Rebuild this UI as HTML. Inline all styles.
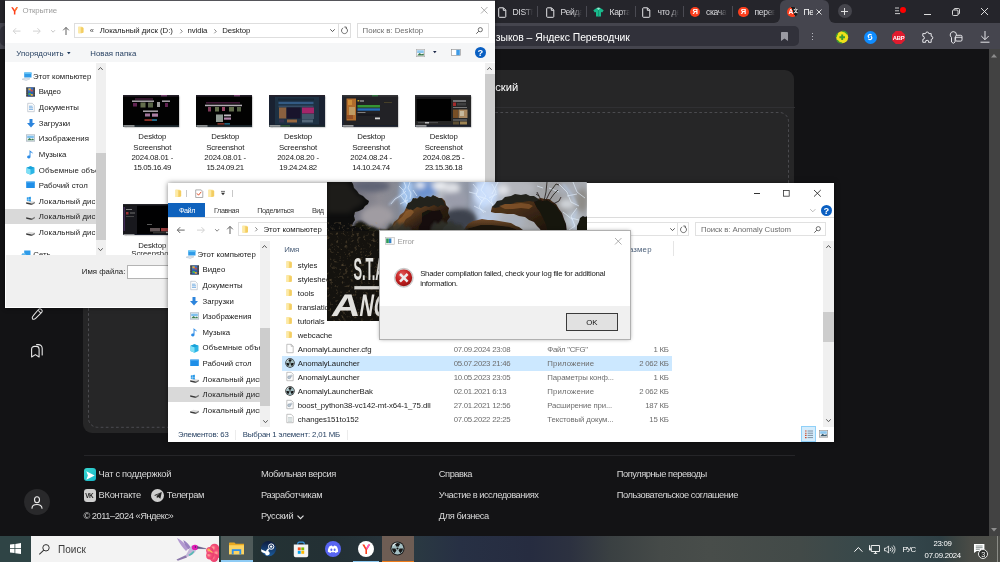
<!DOCTYPE html>
<html lang="ru">
<head>
<meta charset="utf-8">
<title>Яндекс Переводчик</title>
<style>
*{box-sizing:border-box;margin:0;padding:0}
html,body{width:1000px;height:562px;overflow:hidden;background:#131315}
body{position:relative;font-family:"Liberation Sans",sans-serif;font-size:7.8px;color:#000;line-height:1}
#root{position:absolute;left:0;top:0;width:1000px;height:562px;overflow:hidden;will-change:transform}
.a{position:absolute}
.t{position:absolute;white-space:nowrap;line-height:10px;height:10px}
svg{position:absolute;overflow:visible}
/* ---------- browser ---------- */
#tabbar{left:0;top:0;width:1000px;height:23px;background:#25252b}
#toolbar{left:0;top:22.800px;width:1000px;height:26.300px;background:#45454e}
#urlbox{left:0;top:26.200px;width:799.300px;height:20.300px;background:#31313a;border-radius:5px}
.tab{position:absolute;top:0;height:23px;color:#dcdce0;font-size:8.6px}
.tab .t{top:7px;line-height:10px}
.tsep{position:absolute;top:6px;width:1px;height:11px;background:#4a4a52}
#page{left:0;top:49.100px;width:989px;height:487px;background:#131315}
#vscroll{left:989.100px;top:49.100px;width:11px;height:487px;background:#424242}
#card{left:83.200px;top:70px;width:711px;height:363px;background:#262627;border-radius:9px}
#dash{left:88.5px;top:112.5px;width:700.5px;height:315px;border:1px dashed #4b4b4e;border-radius:9px}
.ft{position:absolute;white-space:nowrap;color:#d6d6d6;font-size:10.6px;letter-spacing:-0.55px;line-height:12px;height:12px}
/* ---------- win ---------- */
.win{position:absolute;background:#fff;overflow:hidden}
.nv{position:absolute;white-space:nowrap;font-size:7.9px;line-height:10px;height:10px;color:#111}
</style>
</head>
<body>
<div id="root">
<!-- ================= BROWSER ================= -->
<div class="a" id="tabbar"></div>
<div class="a" id="toolbar"></div>
<div class="a" id="urlbox"></div>
<div class="a" id="page"></div>
<div class="a" id="vscroll"></div>
<div class="a" id="card"></div>
<svg style="left:88.300px;top:112.400px" width="701" height="315.800" viewBox="0 0 701 315.800"><rect x=".5" y=".5" width="700" height="314.800" rx="9" fill="none" stroke="#4c4c50" stroke-width="1" stroke-dasharray="2.700 2.400"/></svg>

<!-- tabs -->
<div class="a" style="left:780.100px;top:0;width:49px;height:23.500px;background:#45454e;border-radius:6px 6px 0 0"></div>
<div class="a" style="left:774.100px;top:17px;width:6px;height:6px;background:#45454e"></div><div class="a" style="left:768.100px;top:11px;width:12px;height:12px;background:#25252b;border-radius:0 0 6px 0"></div>
<div class="a" style="left:829.100px;top:17px;width:6px;height:6px;background:#45454e"></div><div class="a" style="left:829.100px;top:11px;width:12px;height:12px;background:#25252b;border-radius:0 0 0 6px"></div>
<div class="tsep" style="left:537px"></div><div class="tsep" style="left:586px"></div><div class="tsep" style="left:634.5px"></div><div class="tsep" style="left:683px"></div><div class="tsep" style="left:731.5px"></div>
<svg style="left:498px;top:6.5px" width="9" height="11" viewBox="0 0 9 11"><path d="M1.5 .8h4l2.3 2.3v6.4a.8.8 0 0 1-.8.8h-5.500a.8.8 0 0 1-.8-.8v-7.900a.8.8 0 0 1 .8-.8zM5.300 .9v2.400h2.400" fill="none" stroke="#e4e4e8" stroke-width="1"/></svg>
<svg style="left:546px;top:6.5px" width="9" height="11" viewBox="0 0 9 11"><path d="M1.5 .8h4l2.3 2.3v6.4a.8.8 0 0 1-.8.8h-5.500a.8.8 0 0 1-.8-.8v-7.900a.8.8 0 0 1 .8-.8zM5.300 .9v2.400h2.400" fill="none" stroke="#e4e4e8" stroke-width="1"/></svg>
<svg style="left:642px;top:6.500px" width="9" height="11" viewBox="0 0 9 11"><path d="M1.500 .8h4l2.300 2.300v6.400a.8.8 0 0 1-.8.8h-5.500a.8.8 0 0 1-.8-.8v-7.900a.8.8 0 0 1 .8-.8zM5.300 .9v2.400h2.400" fill="none" stroke="#e4e4e8" stroke-width="1"/></svg>
<svg style="left:593px;top:6.500px" width="11" height="11" viewBox="0 0 11 11"><path d="M.3 3.200 3.600 1l1.900 1 1.900-1 3.300 2.200-1.500 2.300-1.200-.6v4.600h-5v-4.600l-1.200.6z" fill="#19b98c"/><path d="M3.600 1l1.900 1.900 1.900-1.900-1.900-.6z" fill="#8ff0d0"/><path d="M5.500 3v6.500" stroke="#0d8a66" stroke-width=".7"/></svg>
<div class="a" style="left:689.9px;top:6.600px;width:10.600px;height:10.600px;border-radius:50%;background:#fc3f1d"></div>
<div class="t" style="left:692.4px;top:7px;font-size:7.600px;font-weight:bold;color:#fff">Я</div>
<div class="a" style="left:738.300px;top:6.600px;width:10.600px;height:10.600px;border-radius:50%;background:#fc3f1d"></div>
<div class="t" style="left:740.8px;top:7px;font-size:7.600px;font-weight:bold;color:#fff">Я</div>
<div class="a" style="left:787.3px;top:6.600px;width:10.600px;height:10.600px;border-radius:50%;background:linear-gradient(68deg,#fc3f1d 0 55%,#1c1c1c 55% 100%)"></div>
<div class="t" style="left:788.6px;top:7.300px;font-size:6.500px;font-weight:bold;color:#fff">A</div>
<div class="t" style="left:793.500px;top:5.800px;font-size:4.500px;font-weight:bold;color:#fff;font-family:'Liberation Sans','Noto Sans CJK SC',sans-serif">文</div>
<div class="tab" style="left:512.5px;width:22px"><div class="t" style="left:0;letter-spacing:-.35px;-webkit-mask-image:linear-gradient(90deg,#000 55%,transparent 100%);mask-image:linear-gradient(90deg,#000 55%,transparent 100%);width:20px;overflow:hidden">DISTR</div></div>
<div class="tab" style="left:560.500px;width:22px"><div class="t" style="left:0;letter-spacing:-.35px;-webkit-mask-image:linear-gradient(90deg,#000 55%,transparent 100%);mask-image:linear-gradient(90deg,#000 55%,transparent 100%);width:21px;overflow:hidden">Рейда</div></div>
<div class="tab" style="left:609.500px;width:22px"><div class="t" style="left:0;letter-spacing:-.35px;-webkit-mask-image:linear-gradient(90deg,#000 55%,transparent 100%);mask-image:linear-gradient(90deg,#000 55%,transparent 100%);width:20.500px;overflow:hidden">Карта</div></div>
<div class="tab" style="left:657.500px;width:22px"><div class="t" style="left:0;letter-spacing:-.35px;-webkit-mask-image:linear-gradient(90deg,#000 55%,transparent 100%);mask-image:linear-gradient(90deg,#000 55%,transparent 100%);width:21px;overflow:hidden">что де</div></div>
<div class="tab" style="left:706px;width:22px"><div class="t" style="left:0;letter-spacing:-.35px;-webkit-mask-image:linear-gradient(90deg,#000 55%,transparent 100%);mask-image:linear-gradient(90deg,#000 55%,transparent 100%);width:21px;overflow:hidden">скачат</div></div>
<div class="tab" style="left:754.500px;width:22px"><div class="t" style="left:0;letter-spacing:-.35px;-webkit-mask-image:linear-gradient(90deg,#000 55%,transparent 100%);mask-image:linear-gradient(90deg,#000 55%,transparent 100%);width:20px;overflow:hidden">перев</div></div>
<div class="tab" style="left:803.500px;width:10px"><div class="t" style="left:0;letter-spacing:-.35px;color:#fff;width:9px;overflow:hidden">Пе</div></div>
<svg style="left:815.600px;top:9px" width="6" height="6" viewBox="0 0 6 6"><path d="M.5 .5l5 5M5.500 .5l-5 5" stroke="#eee" stroke-width=".9" fill="none"/></svg>
<!-- new tab + window controls -->
<div class="a" style="left:837.500px;top:4px;width:14px;height:14px;border-radius:50%;background:#45454c"></div>
<svg style="left:841px;top:7.500px" width="7" height="7" viewBox="0 0 7 7"><path d="M3.500 0v7M0 3.500h7" stroke="#eee" stroke-width=".9"/></svg>
<svg style="left:895px;top:7px" width="6" height="8" viewBox="0 0 6 8"><path d="M0 1h4M0 3.800h4M0 6.600h5" stroke="#ddd" stroke-width=".9"/></svg>
<div class="a" style="left:900.300px;top:6.500px;width:6px;height:6px;border-radius:50%;background:#f00"></div>
<div class="a" style="left:924px;top:14px;width:7px;height:1px;background:#ddd"></div>
<svg style="left:952px;top:8px" width="8" height="8" viewBox="0 0 8 8"><rect x=".5" y="2" width="5.500" height="5.500" rx="1" fill="none" stroke="#e8e8e8" stroke-width=".9"/><path d="M2 2v-.5a1 1 0 0 1 1-1h3.500a1 1 0 0 1 1 1v3.500a1 1 0 0 1-1 1h-.5" fill="none" stroke="#e8e8e8" stroke-width=".9"/></svg>
<svg style="left:981px;top:8.300px" width="7" height="7" viewBox="0 0 7 7"><path d="M0 0l7 7M7 0l-7 7" stroke="#eee" stroke-width=".9" fill="none"/></svg>
<!-- url title -->
<svg style="left:780.500px;top:32px" width="7" height="9" viewBox="0 0 7 9"><path d="M0 .8a.8.8 0 0 1 .8-.8h5.400a.8.8 0 0 1 .8.800v8.200l-3.500-2.600-3.500 2.600z" fill="#9a9aa2"/></svg>
<div class="a" style="left:812px;top:33px;width:1.200px;height:1.200px;background:#b8b8c0;box-shadow:0 3px 0 #b8b8c0,0 6px 0 #b8b8c0"></div>
<!-- extension icons -->
<svg style="left:835.500px;top:30.800px" width="12.400" height="12.400" viewBox="0 0 12.400 12.400"><circle cx="6.200" cy="6.200" r="6" fill="#efe11a"/><path d="M1 9.200a6 6 0 0 0 5.200 3M11.400 3.200a6 6 0 0 0-5.200-3M.2 6.200a6 6 0 0 1 1.600-4" fill="none" stroke="#3f9b2f" stroke-width="1.300"/><path d="M6.200 3.400v5.600M3.400 6.200h5.600" stroke="#3a9a34" stroke-width="1.900"/></svg>
<div class="a" style="left:863.500px;top:30.500px;width:13px;height:13px;border-radius:50%;background:#0f8cff"></div>
<svg style="left:866px;top:33px" width="8" height="8" viewBox="0 0 8 8"><path d="M5.400 1.900c-.9-.7-2.100-.6-2.800.2-.7.800-.5 1.700.3 2.300M2.600 6.100c.9.700 2.100.6 2.800-.2.700-.8.500-1.700-.3-2.300" fill="none" stroke="#fff" stroke-width="1.200" stroke-linecap="round"/></svg>
<svg style="left:892px;top:30.500px" width="13" height="13" viewBox="0 0 13 13"><path d="M3.800 0h5.400l3.800 3.800v5.400l-3.800 3.800h-5.400l-3.800-3.800v-5.400z" fill="#e01b2e"/><text x="6.500" y="8.700" font-family="Liberation Sans,sans-serif" font-size="5.800" font-weight="bold" fill="#fff" text-anchor="middle" letter-spacing="-.2">ABP</text></svg>
<svg style="left:920.500px;top:30.500px" width="13" height="13" viewBox="0 0 13 13"><path d="M4.600 2.600a1.600 1.600 0 1 1 3.200 0h2.400v2.600a1.600 1.600 0 1 1 0 3.200v2.900h-2.700a1.500 1.500 0 1 0-2.800 0h-2.900v-2.900a1.600 1.600 0 1 0 0-3.200v-2.600z" fill="none" stroke="#e6e6ea" stroke-width="1"/></svg>
<svg style="left:949px;top:30.500px" width="14" height="13" viewBox="0 0 14 13"><path d="M4.200 .6a3.300 3.300 0 0 1 3.300 3.300c0 1.200-.6 2-1.400 2.600v4.500l-1.800 1.300-1.800-1.300v-4.500a3.300 3.300 0 0 1 1.700-5.900z" fill="none" stroke="#e6e6ea" stroke-width="1"/><rect x="6.600" y="4.300" width="6.400" height="5.800" rx="1.200" fill="#45454e" stroke="#e6e6ea" stroke-width="1"/><path d="M6.600 6.300h6.400" stroke="#e6e6ea" stroke-width=".9"/></svg>
<svg style="left:979.500px;top:31px" width="10" height="12" viewBox="0 0 10 12"><path d="M5 0v8.500M1.300 5l3.700 3.700 3.700-3.700M.5 11.200h9" fill="none" stroke="#e6e6ea" stroke-width="1"/></svg>
<!-- page scrollbar arrows -->
<svg style="left:991px;top:53.500px" width="6" height="4" viewBox="0 0 6 4"><path d="M0 3.500l3-3.500 3 3.500z" fill="#8e8e8e"/></svg>
<svg style="left:991.400px;top:528px" width="6" height="4" viewBox="0 0 6 4"><path d="M0 0l3 3.500 3-3.500z" fill="#8e8e8e"/></svg>
<!-- card -->
<div class="a" style="left:83px;top:106.500px;width:711.500px;height:1px;background:#303033"></div>
<!-- sidebar -->
<svg style="left:31px;top:308.300px" width="12" height="12" viewBox="0 0 13 13"><path d="M8.300 1.400a1.900 1.900 0 0 1 2.700 0l.6.600a1.900 1.900 0 0 1 0 2.700l-6.300 6.300c-.8.800-2.700 1.400-3.700.9-.5-1 .1-2.900.900-3.700zM7.900 2.700l2.500 2.500" fill="none" stroke="#e6e6e6" stroke-width="1.100" stroke-linejoin="round"/></svg>
<svg style="left:30.500px;top:343.500px" width="12" height="14" viewBox="0 0 12 14"><path d="M.600 5.200a2.800 2.800 0 0 1 2.800-2.800h1.900a2.800 2.800 0 0 1 2.800 2.800v7.800l-3.700-2.400-3.800 2.400z" fill="none" stroke="#e6e6e6" stroke-width="1.100" stroke-linejoin="round"/><path d="M5.600 .600h1.800a3.800 3.800 0 0 1 3.800 3.800v6.600" fill="none" stroke="#e6e6e6" stroke-width="1.100" stroke-linecap="round"/></svg>
<div class="a" style="left:23.500px;top:489px;width:26px;height:26px;border-radius:50%;background:#29292b"></div>
<svg style="left:30.500px;top:495.500px" width="12" height="13" viewBox="0 0 12 13"><ellipse cx="6" cy="3.800" rx="2.500" ry="3" fill="none" stroke="#efefef" stroke-width="1.100"/><path d="M1 12.300c0-2.500 2.200-3.800 5-3.800s5 1.300 5 3.800" fill="none" stroke="#efefef" stroke-width="1.100" stroke-linecap="round"/></svg>
<!-- footer -->
<div class="a" style="left:83.500px;top:454.600px;width:711px;height:1px;background:#252528"></div>
<div class="a" style="left:83.500px;top:468.200px;width:12.800px;height:13px;border-radius:3px;background:linear-gradient(135deg,#3ad8d0,#14b4c8)"></div>
<svg style="left:85.500px;top:470.500px" width="9" height="9" viewBox="0 0 9 9"><path d="M.3 .3l8.400 4.200-8.400 4.200 1.600-4.200z" fill="#fff"/></svg>
<div class="a" style="left:83.500px;top:489.200px;width:12.800px;height:13px;border-radius:3px;background:#cfcfcf"></div>
<div class="t" style="left:85.300px;top:491.200px;font-size:6.400px;font-weight:bold;color:#222;letter-spacing:-.5px;line-height:9px;height:9px">VK</div>
<div class="a" style="left:151.200px;top:489.200px;width:12.800px;height:13px;border-radius:50%;background:#cfcfcf"></div>
<svg style="left:153.500px;top:492px" width="8" height="7" viewBox="0 0 8 7"><path d="M0 3.200l7.800-3.100-1.400 6.600-2.300-1.700-1.200 1.200-.3-2.100 3.400-3-4.300 2.600z" fill="#222"/></svg>
<svg style="left:296.500px;top:514.500px" width="7" height="5" viewBox="0 0 7 5"><path d="M.500 .600l3 3 3-3" fill="none" stroke="#e0e0e0" stroke-width="1.200"/></svg>

<div class="t" style="top:31px;font-size:10.4px;color:#fff;line-height:13px;height:13px;left:495.8px;letter-spacing:-0.044px;">зыков – Яндекс Переводчик</div>
<div class="t" style="top:80px;font-size:11.2px;color:#fff;line-height:14px;height:14px;left:478.2px;letter-spacing:-0.034px;">русский</div>
<div class="t" style="top:468px;font-size:9.3px;color:#d9d9d9;line-height:12px;height:12px;left:98.6px;letter-spacing:-0.294px;">Чат с поддержкой</div>
<div class="t" style="top:489px;font-size:9.3px;color:#d9d9d9;line-height:12px;height:12px;left:98.6px;letter-spacing:-0.273px;">ВКонтакте</div>
<div class="t" style="top:489px;font-size:9.3px;color:#d9d9d9;line-height:12px;height:12px;left:166.8px;letter-spacing:-0.448px;">Телеграм</div>
<div class="t" style="top:510px;font-size:9.3px;color:#d9d9d9;line-height:12px;height:12px;left:83.4px;letter-spacing:-0.479px;">© 2011–2024 «Яндекс»</div>
<div class="t" style="top:468px;font-size:9.3px;color:#d9d9d9;line-height:12px;height:12px;left:260.9px;letter-spacing:-0.425px;">Мобильная версия</div>
<div class="t" style="top:489px;font-size:9.3px;color:#d9d9d9;line-height:12px;height:12px;left:260.9px;letter-spacing:-0.347px;">Разработчикам</div>
<div class="t" style="top:510px;font-size:9.3px;color:#d9d9d9;line-height:12px;height:12px;left:260.9px;letter-spacing:-0.287px;">Русский</div>
<div class="t" style="top:468px;font-size:9.3px;color:#d9d9d9;line-height:12px;height:12px;left:438.8px;letter-spacing:-0.454px;">Справка</div>
<div class="t" style="top:489px;font-size:9.3px;color:#d9d9d9;line-height:12px;height:12px;left:438.8px;letter-spacing:-0.488px;">Участие в исследованиях</div>
<div class="t" style="top:510px;font-size:9.3px;color:#d9d9d9;line-height:12px;height:12px;left:438.8px;letter-spacing:-0.378px;">Для бизнеса</div>
<div class="t" style="top:468px;font-size:9.3px;color:#d9d9d9;line-height:12px;height:12px;left:616.8px;letter-spacing:-0.475px;">Популярные переводы</div>
<div class="t" style="top:489px;font-size:9.3px;color:#d9d9d9;line-height:12px;height:12px;left:616.8px;letter-spacing:-0.477px;">Пользовательское соглашение</div>

<!-- ================= OPEN FILE DIALOG ================= -->
<div class="a" style="left:4.6px;top:0px;width:490.3px;height:307.7px;background:#fff;box-shadow:0 0 4px rgba(0,0,0,.55);border-top:1px solid #55555a"></div>
<svg style="left:11px;top:7px" width="7" height="7.5" viewBox="0 0 7 7.500"><path d="M.2 .2h1.700l1.800 2.900 1.600-2.900h1.600l-2.500 4.200v3h-1.500v-3z" fill="#fc3f1d"/><path d="M3.700 3.100l1.600-2.900h1.600l-2.500 4.200z" fill="#ff7a2a"/></svg>
<div class="t" style="top:6px;font-size:7.8px;color:#9b9b9b;line-height:10px;height:10px;left:22.6px;letter-spacing:-0.12px;">Открытие</div>
<svg style="left:481.2px;top:7px" width="6.5" height="6.5" viewBox="0 0 6.5 6.5"><path d="M0 0l6.500 6.500M6.500 0l-6.500 6.500" stroke="#9a9a9a" stroke-width=".8" fill="none"/></svg>
<svg style="left:13.3px;top:28px" width="7.5" height="6.2" viewBox="0 0 7.5 6.2"><path d="M7.500 3.100h-7M3.100 .2l-2.900 2.900 2.900 2.900" stroke="#cdcdcd" stroke-width=".9" fill="none"/></svg>
<svg style="left:33px;top:28px" width="7.5" height="6.2" viewBox="0 0 7.5 6.2"><path d="M0 3.100h7M4.400 .2l2.900 2.900-2.900 2.900" stroke="#cdcdcd" stroke-width=".9" fill="none"/></svg>
<svg style="left:51px;top:29.8px" width="4.2" height="2.6" viewBox="0 0 4.2 2.6"><path d="M.2 .2l1.900 2 1.900-2" stroke="#b8b8b8" stroke-width=".8" fill="none"/></svg>
<svg style="left:63.2px;top:27.2px" width="6" height="8" viewBox="0 0 6 8"><path d="M3 8v-7.500M.2 3.300l2.800-2.900 2.800 2.900" stroke="#5a5a5a" stroke-width=".95" fill="none"/></svg>
<div class="a" style="left:74.3px;top:23.3px;width:276.5px;height:14.7px;background:#fff;border:1px solid #dedede"></div>
<svg style="left:78px;top:26.3px" width="6" height="7.8" viewBox="0 0 8 9.200"><path d="M.6 .4h3.400c1.400 0 3.200 .5 3.200 1.600v6.200l-2.800 .8h-3.800z" fill="#f8da7c"/><path d="M.6 .4h2.300l.6 1v6.600l-.6 1h-2.300z" fill="#fdeaa6"/><path d="M4.300 1.500l2.900 .5v6.200l-2.900 .8z" fill="#f3cd62"/></svg>
<div class="t" style="top:26px;font-size:7.5px;color:#444;line-height:10px;height:10px;left:89.8px;">«</div>
<div class="t" style="top:26px;font-size:7.8px;color:#1a1a1a;line-height:10px;height:10px;left:99.8px;letter-spacing:-0.04px;">Локальный диск (D:)</div>
<svg style="left:179.5px;top:29px" width="3" height="4.5" viewBox="0 0 3 4.5"><path d="M.3 .3l2 2-2 2" stroke="#555" stroke-width=".7" fill="none"/></svg>
<div class="t" style="top:26px;font-size:7.8px;color:#1a1a1a;line-height:10px;height:10px;left:187.5px;letter-spacing:-0.1px;">nvidia</div>
<svg style="left:213.8px;top:29px" width="3" height="4.5" viewBox="0 0 3 4.5"><path d="M.3 .3l2 2-2 2" stroke="#555" stroke-width=".7" fill="none"/></svg>
<div class="t" style="top:26px;font-size:7.8px;color:#1a1a1a;line-height:10px;height:10px;left:222.3px;letter-spacing:-0.1px;">Desktop</div>
<svg style="left:329.8px;top:29.3px" width="5" height="3.2" viewBox="0 0 5 3.2"><path d="M.3 .3l2.200 2.300 2.200-2.300" stroke="#444" stroke-width=".9" fill="none"/></svg>
<div class="a" style="left:338.3px;top:23.3px;width:1px;height:14.7px;background:#dedede;"></div>
<svg style="left:341.3px;top:27.3px" width="7" height="7" viewBox="0 0 7 7"><path d="M4.800 .9a3 3 0 1 1-2.600 0" stroke="#555" stroke-width=".85" fill="none"/><path d="M3.300 0h2v2" stroke="#555" stroke-width=".85" fill="none"/></svg>
<div class="a" style="left:357.2px;top:23.3px;width:131.8px;height:14.7px;background:#fff;border:1px solid #dedede"></div>
<div class="t" style="top:26px;font-size:7.8px;color:#6d6d6d;line-height:10px;height:10px;left:362.6px;letter-spacing:-0.02px;">Поиск в: Desktop</div>
<svg style="left:476px;top:27.3px" width="7" height="7" viewBox="0 0 7 7"><circle cx="4.300" cy="2.700" r="2.100" stroke="#555" stroke-width=".85" fill="none"/><path d="M2.800 4.200l-2.500 2.500" stroke="#555" stroke-width=".95"/></svg>
<div class="a" style="left:5.3px;top:42.8px;width:489.4px;height:19.5px;background:#f5f6f7;"></div>
<div class="t" style="top:49px;font-size:7.8px;color:#1e395b;line-height:10px;height:10px;left:16.2px;letter-spacing:0.1px;">Упорядочить</div>
<svg style="left:66.8px;top:52px" width="3.6" height="2.2" viewBox="0 0 3.6 2.2"><path d="M0 0h3.600l-1.800 2.200z" fill="#1e395b"/></svg>
<div class="t" style="top:49px;font-size:7.8px;color:#1e395b;line-height:10px;height:10px;left:90.3px;letter-spacing:0.05px;">Новая папка</div>
<svg style="left:416.4px;top:48.6px" width="9" height="8" viewBox="0 0 9 8"><rect x=".3" y=".3" width="8.400" height="7.400" fill="#f4f4f4" stroke="#a8a8a8" stroke-width=".6"/><rect x="1.200" y="1.300" width="6.600" height="2.700" fill="#8cc6ee"/><path d="M1.200 6.500l2.300-2.500 2 1.300 2.300-.8v2z" fill="#3d7a4c"/></svg>
<svg style="left:432.7px;top:51.4px" width="3.6" height="2.2" viewBox="0 0 3.6 2.2"><path d="M0 0h3.600l-1.800 2.200z" fill="#1e2a4a"/></svg>
<svg style="left:451.3px;top:49.3px" width="9.6" height="7" viewBox="0 0 9.6 7"><rect x=".3" y=".3" width="9" height="6.400" fill="#fff" stroke="#8a8a8a" stroke-width=".6"/><rect x="5.300" y=".9" width="3.500" height="5.200" fill="#3f9be6"/></svg>
<div class="a" style="left:474.5px;top:47.1px;width:11.2px;height:11.2px;background:#0a5fc2;border-radius:50%"></div>
<div class="t" style="top:47px;font-size:9.3px;color:#fff;line-height:12px;height:12px;left:477.5px;font-weight:bold;">?</div>
<div class="a" style="left:95.6px;top:62.6px;width:10.1px;height:192.6px;background:#f0f0f0;"></div>
<div class="a" style="left:95.6px;top:152.6px;width:10.1px;height:87.8px;background:#cdcdcd;"></div>
<svg style="left:98.1px;top:66.6px" width="5" height="3.2" viewBox="0 0 5 3.2"><path d="M.3 2.900l2.200-2.400 2.200 2.400" stroke="#505050" stroke-width=".95" fill="none"/></svg>
<svg style="left:98.1px;top:248px" width="5" height="3.2" viewBox="0 0 5 3.2"><path d="M.3 .3l2.200 2.400 2.200-2.400" stroke="#505050" stroke-width=".95" fill="none"/></svg>
<div class="a" style="left:5.3px;top:209.1px;width:90.3px;height:15px;background:#d9d9d9;"></div>
<div class="a" style="left:5.300px;top:62.600px;width:90.300px;height:192.600px;overflow:hidden">
<svg style="left:17.0px;top:9.3px" width="10" height="9" viewBox="0 0 10 9"><path d="M2.200 .5h7.300v5h-7.300z" fill="#2f9be8"/><path d="M2.200 .5h7.300v1.500h-7.300z" fill="#63c3f5"/><path d="M0 7.200l3.500-1.200 4.500 .8-3.800 1.700z" fill="#dfe6ee" stroke="#9fb0c0" stroke-width=".4"/></svg>
<div class="t" style="left:27.8px;top:9.4px;color:#1a1a1a;letter-spacing:-0.01px;">Этот компьютер</div>
<svg style="left:20.900000000000002px;top:24.299999999999997px" width="9.2" height="10" viewBox="0 0 9.2 10"><rect x=".2" y=".2" width="8.800" height="9.600" fill="#55585c"/><rect x="1.900" y=".6" width="5.400" height="4.200" fill="#2f6fd0"/><rect x="1.900" y="5.200" width="5.400" height="4.200" fill="#2a5fb8"/><rect x="2.400" y="1.300" width="2.400" height="2" fill="#e8b030"/><rect x="4.600" y="2.600" width="2.200" height="1.800" fill="#d84a3a"/><rect x="2.600" y="6" width="2.400" height="2" fill="#4ab04a"/><rect x="4.800" y="7" width="2" height="1.800" fill="#e8a030"/><path d="M1 .8v8.600M8.200 .8v8.600" stroke="#2a2c30" stroke-width=".9" stroke-dasharray="1 .8"/></svg>
<div class="t" style="left:33.5px;top:24.4px;color:#1a1a1a;letter-spacing:-0.17px;">Видео</div>
<svg style="left:21.3px;top:40.6px" width="8" height="9" viewBox="0 0 8 9"><path d="M.7 .3h4.600l2 2v6.400h-6.600z" fill="#fdfdfd" stroke="#a9b4c0" stroke-width=".6"/><path d="M2 3.200h3.500M2 4.800h4M2 6.400h4" stroke="#5ea0dc" stroke-width=".8"/></svg>
<div class="t" style="left:33.5px;top:40.4px;color:#1a1a1a;letter-spacing:-0.01px;">Документы</div>
<svg style="left:21.3px;top:56.2px" width="8" height="9" viewBox="0 0 8 9"><path d="M2.500 0h3v4h2.500l-4 4.500-4-4.500h2.500z" fill="#2c84dc"/></svg>
<div class="t" style="left:33.5px;top:56.4px;color:#1a1a1a;">Загрузки</div>
<svg style="left:21.0px;top:71.8px" width="9" height="8" viewBox="0 0 9 8"><rect x=".3" y=".8" width="8.400" height="6.400" fill="#eef3f7" stroke="#9aa7b3" stroke-width=".6"/><rect x="1.200" y="1.700" width="6.600" height="2.400" fill="#7fc0ee"/><path d="M1.200 6.300l2.300-2.400 2 1.500 1.300-.9 1 1v.8z" fill="#3f7f4f"/></svg>
<div class="t" style="left:33.5px;top:71.4px;color:#1a1a1a;letter-spacing:0.11px;">Изображения</div>
<svg style="left:21.9px;top:87.4px" width="7" height="9" viewBox="0 0 7 9"><path d="M2.600 0c.8 1.500 3.400 1.800 3.600 4-.8-1.300-2-1.400-2.700-1.700v4.700a1.700 1.500 0 1 1-1-1.400z" fill="#2c8be6"/></svg>
<div class="t" style="left:33.5px;top:87.4px;color:#1a1a1a;">Музыка</div>
<svg style="left:21.0px;top:103.0px" width="9" height="9" viewBox="0 0 9 9"><path d="M4.500 .3l4 1.500v5.200l-4 1.700-4-1.700v-5.200z" fill="#2bb5e6"/><path d="M.5 1.800l4 1.500v5.400l-4-1.700z" fill="#7fe0f5"/><path d="M4.500 .3l4 1.500-4 1.500-4-1.500z" fill="#19a0d8"/></svg>
<div class="t" style="left:33.5px;top:103.4px;color:#1a1a1a;letter-spacing:0.12px;">Объемные объекты</div>
<svg style="left:21.0px;top:118.6px" width="9" height="8" viewBox="0 0 9 8"><rect x=".2" y=".6" width="8.600" height="6.400" fill="#1f8fe8"/><rect x=".2" y=".6" width="8.600" height="1.200" fill="#46a8f0"/></svg>
<div class="t" style="left:33.5px;top:118.4px;color:#1a1a1a;">Рабочий стол</div>
<svg style="left:21.0px;top:134.2px" width="9" height="8" viewBox="0 0 9 8"><path d="M.2 5.300l3.200-1.500 5.400 1-3 1.700z" fill="#dcdcdc"/><path d="M.2 5.300l5.600 1.200v1.500l-5.600-1.300z" fill="#3a3a3a"/><path d="M5.800 6.500l3-1.700v1.400l-3 1.800z" fill="#707070"/><path d="M.8 .4l1.800-.3v1.900h-1.800zM2.900 0l2-.3v2.300h-2zM.8 2.300h1.800v1.800l-1.800-.3zM2.900 2.300h2v2.200l-2-.3z" fill="#2b9ae8"/></svg>
<div class="t" style="left:33.5px;top:134.4px;color:#1a1a1a;letter-spacing:0.12px;">Локальный диск (C:)</div>
<svg style="left:21.0px;top:149.8px" width="9" height="8" viewBox="0 0 9 8"><path d="M.2 5.300l3.200-1.500 5.400 1-3 1.700z" fill="#dcdcdc"/><path d="M.2 5.300l5.600 1.200v1.500l-5.600-1.300z" fill="#3a3a3a"/><path d="M5.800 6.500l3-1.700v1.400l-3 1.800z" fill="#707070"/></svg>
<div class="t" style="left:33.5px;top:149.4px;color:#1a1a1a;letter-spacing:0.12px;">Локальный диск (D:)</div>
<svg style="left:21.0px;top:165.4px" width="9" height="8" viewBox="0 0 9 8"><path d="M.2 5.300l3.200-1.500 5.400 1-3 1.700z" fill="#dcdcdc"/><path d="M.2 5.300l5.600 1.200v1.500l-5.600-1.300z" fill="#3a3a3a"/><path d="M5.800 6.500l3-1.700v1.400l-3 1.800z" fill="#707070"/></svg>
<div class="t" style="left:33.5px;top:165.4px;color:#1a1a1a;letter-spacing:0.12px;">Локальный диск (E:)</div>
<svg style="left:15.7px;top:187.2px" width="10" height="9" viewBox="0 0 10 9"><path d="M3.200 .5h6.300v4.500h-6.300z" fill="#2f9be8"/><circle cx="3" cy="5.500" r="2.600" fill="#3fa8e8"/><path d="M.4 5.500h5.200M3 2.900c-1.500 1.600-1.500 3.600 0 5.200M3 2.900c1.500 1.600 1.500 3.600 0 5.200" stroke="#d8f0ff" stroke-width=".4" fill="none"/></svg>
<div class="t" style="left:28.0px;top:187.4px;color:#1a1a1a;">Сеть</div>
</div>
<div class="a" style="left:485.1px;top:62.6px;width:9.6px;height:192.6px;background:#f0f0f0;"></div>
<div class="a" style="left:485.1px;top:74px;width:9.6px;height:120px;background:#cdcdcd;"></div>
<svg style="left:487.4px;top:66.6px" width="5" height="3.2" viewBox="0 0 5 3.2"><path d="M.3 2.900l2.200-2.400 2.200 2.400" stroke="#505050" stroke-width=".95" fill="none"/></svg>
<svg style="left:123.2px;top:95.1px;overflow:hidden;box-shadow:.8px .8px 1.500px rgba(0,0,0,.5)" width="56.2" height="31.7" viewBox="0 0 56.2 31.7"><defs><filter id="tb1" x="-5%" y="-5%" width="110%" height="110%"><feGaussianBlur stdDeviation=".55"/></filter></defs><rect width="56.2" height="31.7" fill="#0a0a0c"/><g filter="url(#tb1)" opacity="0.78"><rect width="56.200" height="31.700" fill="#050505"/><rect width="56.200" height="1.600" fill="#2b2530"/><rect x="38" y=".3" width="6" height="1" fill="#c060b0"/><rect y="30" width="56.200" height="1.700" fill="#1a2a30"/><rect x=".5" y="30.300" width="11" height="1.200" fill="#e8e8e8"/><rect x="9" y="5.500" width="22" height="1.400" fill="#e6dde6"/><rect x="39" y="5.500" width="8" height="1.400" fill="#e6dde6"/><rect x="12" y="3.600" width="18" height=".8" fill="#9a3a80"/><rect x="17.500" y="7.500" width="5" height="5" fill="#7c8a5e"/><rect x="25" y="7.500" width="5" height="5" fill="#6e7e58"/><rect x="34" y="7" width="3" height="5" fill="#c8c8c8"/><rect x="10" y="8" width="4" height="3.500" fill="#7a2a66"/><rect x="42" y="8" width="3" height="4" fill="#7a2a66"/><rect x="20" y="15.500" width="15" height="1.400" fill="#e6dde6"/><rect x="22" y="18.500" width="5" height="3" fill="#c890c0"/><rect x="29" y="18.500" width="6" height="3.200" fill="#d7a0cc"/><rect x="21.500" y="24.300" width="7.500" height="1.500" fill="#d84a3a"/><rect x="29" y="24.300" width="5" height="1.500" fill="#2fa8d8"/></g></svg>
<div class="t" style="left:112.36px;top:132px;width:80px;text-align:center;font-size:7.8px;color:#1a1a1a;line-height:10px;height:10px;letter-spacing:-0.088px;">Desktop</div>
<div class="t" style="left:112.33px;top:143px;width:80px;text-align:center;font-size:7.8px;color:#1a1a1a;line-height:10px;height:10px;letter-spacing:-0.146px;">Screenshot</div>
<div class="t" style="left:112.31px;top:153px;width:80px;text-align:center;font-size:7.8px;color:#1a1a1a;line-height:10px;height:10px;letter-spacing:-0.175px;">2024.08.01 -</div>
<div class="t" style="left:112.23px;top:163px;width:80px;text-align:center;font-size:7.8px;color:#1a1a1a;line-height:10px;height:10px;letter-spacing:-0.337px;">15.05.16.49</div>
<svg style="left:196.1px;top:95.1px;overflow:hidden;box-shadow:.8px .8px 1.500px rgba(0,0,0,.5)" width="56.2" height="31.7" viewBox="0 0 56.2 31.7"><defs><filter id="tb2" x="-5%" y="-5%" width="110%" height="110%"><feGaussianBlur stdDeviation=".55"/></filter></defs><rect width="56.2" height="31.7" fill="#0a0a0c"/><g filter="url(#tb2)" opacity="0.78"><rect width="56.200" height="31.700" fill="#050505"/><rect width="56.200" height="1.600" fill="#2b2530"/><rect x="38" y=".3" width="6" height="1" fill="#c060b0"/><rect y="30" width="56.200" height="1.700" fill="#1a2a30"/><rect x=".5" y="30.300" width="11" height="1.200" fill="#e8e8e8"/><rect x="9" y="9.700" width="37" height="1.500" fill="#e6dde6"/><rect x="10" y="7.500" width="34" height=".8" fill="#9a3a80"/><rect x="12" y="12" width="3" height="4.500" fill="#a04a70"/><rect x="19" y="12" width="4" height="4.500" fill="#7c8a5e"/><rect x="26" y="12" width="3" height="4" fill="#c05a80"/><rect x="33" y="12" width="5" height="4.500" fill="#7c8a5e"/><rect x="41" y="12" width="4" height="4.500" fill="#6a7a54"/><rect x="20" y="19.500" width="7" height="7.500" fill="#b8c4bc"/><rect x="28" y="19.500" width="7" height="1.800" fill="#f0e8f0"/><rect x="28" y="22.500" width="7" height="2.200" fill="#e0a8d8"/><rect x="21.500" y="28.300" width="7" height="1.200" fill="#d84a3a"/><rect x="28.500" y="28.300" width="5.500" height="1.200" fill="#2fa8d8"/></g></svg>
<div class="t" style="left:185.26px;top:132px;width:80px;text-align:center;font-size:7.8px;color:#1a1a1a;line-height:10px;height:10px;letter-spacing:-0.088px;">Desktop</div>
<div class="t" style="left:185.23px;top:143px;width:80px;text-align:center;font-size:7.8px;color:#1a1a1a;line-height:10px;height:10px;letter-spacing:-0.146px;">Screenshot</div>
<div class="t" style="left:185.21px;top:153px;width:80px;text-align:center;font-size:7.8px;color:#1a1a1a;line-height:10px;height:10px;letter-spacing:-0.175px;">2024.08.01 -</div>
<div class="t" style="left:185.13px;top:163px;width:80px;text-align:center;font-size:7.8px;color:#1a1a1a;line-height:10px;height:10px;letter-spacing:-0.337px;">15.24.09.21</div>
<svg style="left:268.9px;top:95.1px;overflow:hidden;box-shadow:.8px .8px 1.500px rgba(0,0,0,.5)" width="56.2" height="31.7" viewBox="0 0 56.2 31.7"><defs><filter id="tb3" x="-5%" y="-5%" width="110%" height="110%"><feGaussianBlur stdDeviation=".55"/></filter></defs><rect width="56.2" height="31.7" fill="#0a0a0c"/><g filter="url(#tb3)" opacity="0.85"><rect width="56.200" height="31.700" fill="#1b2838"/><rect width="56.200" height="1.500" fill="#2b2530"/><rect x="6" y="2" width="44" height="27.500" fill="#22384e"/><rect x="9" y="3.500" width="36" height="2" fill="#1a2a3c"/><rect x="9.500" y="6.800" width="35" height="2.300" fill="#3a6a9a"/><rect x="9.500" y="10.500" width="35" height="1.800" fill="#3c5874"/><rect x="10" y="12.500" width="7.500" height="11" fill="#a0704a"/><rect x="17.500" y="12.500" width="14" height="11" fill="#1a1630"/><rect x="33" y="12.500" width="12" height="6" fill="#c02a7a"/><rect x="33" y="19" width="12" height="5" fill="#50667c"/><rect x="10" y="24.500" width="5" height="3" fill="#3a3a5a"/><rect x="18" y="24.500" width="10" height="3" fill="#b07848"/><rect x="33" y="24.500" width="11" height="3" fill="#60788c"/><rect y="30" width="56.200" height="1.700" fill="#1a2a30"/><rect x=".5" y="30.300" width="11" height="1.200" fill="#e8e8e8"/><rect x="12" y="30.300" width="9" height="1.200" fill="#4a7a4a"/></g></svg>
<div class="t" style="left:258.06px;top:132px;width:80px;text-align:center;font-size:7.8px;color:#1a1a1a;line-height:10px;height:10px;letter-spacing:-0.088px;">Desktop</div>
<div class="t" style="left:258.03px;top:143px;width:80px;text-align:center;font-size:7.8px;color:#1a1a1a;line-height:10px;height:10px;letter-spacing:-0.146px;">Screenshot</div>
<div class="t" style="left:258.01px;top:153px;width:80px;text-align:center;font-size:7.8px;color:#1a1a1a;line-height:10px;height:10px;letter-spacing:-0.175px;">2024.08.20 -</div>
<div class="t" style="left:257.93px;top:163px;width:80px;text-align:center;font-size:7.8px;color:#1a1a1a;line-height:10px;height:10px;letter-spacing:-0.337px;">19.24.24.82</div>
<svg style="left:342px;top:95.1px;overflow:hidden;box-shadow:.8px .8px 1.500px rgba(0,0,0,.5)" width="56.2" height="31.7" viewBox="0 0 56.2 31.7"><defs><filter id="tb4" x="-5%" y="-5%" width="110%" height="110%"><feGaussianBlur stdDeviation=".55"/></filter></defs><rect width="56.2" height="31.7" fill="#0a0a0c"/><g filter="url(#tb4)" opacity="0.88"><rect width="56.200" height="31.700" fill="#262629"/><rect width="56.200" height="1.500" fill="#3a3a40"/><rect x="30" y=".3" width="6" height="1" fill="#3a9a4a"/><rect x="0" y="1.500" width="2.200" height="28.500" fill="#222a3a"/><rect x="4.500" y="3.500" width="9.500" height="22" fill="#c87a32"/><rect x="6" y="5" width="4" height="5" fill="#e8a040"/><rect x="7" y="12" width="6" height="8" fill="#d8b070"/><rect x="5" y="20" width="6" height="4" fill="#a85a2a"/><rect x="15.500" y="5" width="1.800" height="1.500" fill="#e8c020"/><rect x="18" y="5.500" width="4" height="1" fill="#ddd"/><rect x="15.500" y="10" width="22.500" height="2.500" fill="#3aa83a"/><rect x="15.500" y="13.300" width="22.500" height="2.400" fill="#2a7ad0"/><rect x="15.500" y="17" width="8" height=".8" fill="#aaa"/><rect x="15.500" y="18.800" width="22" height="2" fill="#1e1e22"/><rect x="33" y="22.500" width="5" height="1.800" fill="#f0f0f0"/><rect x="42" y="7" width="8" height=".8" fill="#5a5030"/><rect y="30" width="56.200" height="1.700" fill="#1a2030"/><rect x=".5" y="30.300" width="11" height="1.200" fill="#e8e8e8"/></g></svg>
<div class="t" style="left:331.16px;top:132px;width:80px;text-align:center;font-size:7.8px;color:#1a1a1a;line-height:10px;height:10px;letter-spacing:-0.088px;">Desktop</div>
<div class="t" style="left:331.13px;top:143px;width:80px;text-align:center;font-size:7.8px;color:#1a1a1a;line-height:10px;height:10px;letter-spacing:-0.146px;">Screenshot</div>
<div class="t" style="left:331.11px;top:153px;width:80px;text-align:center;font-size:7.8px;color:#1a1a1a;line-height:10px;height:10px;letter-spacing:-0.175px;">2024.08.24 -</div>
<div class="t" style="left:331.03px;top:163px;width:80px;text-align:center;font-size:7.8px;color:#1a1a1a;line-height:10px;height:10px;letter-spacing:-0.337px;">14.10.24.74</div>
<svg style="left:414.6px;top:95.1px;overflow:hidden;box-shadow:.8px .8px 1.500px rgba(0,0,0,.5)" width="56.2" height="31.7" viewBox="0 0 56.2 31.7"><defs><filter id="tb5" x="-5%" y="-5%" width="110%" height="110%"><feGaussianBlur stdDeviation=".55"/></filter></defs><rect width="56.2" height="31.7" fill="#0a0a0c"/><g filter="url(#tb5)" opacity="0.85"><rect width="56.200" height="31.700" fill="#2a2a2c"/><rect width="56.200" height="1.500" fill="#3a3a40"/><rect x="1.500" y="4" width="34.500" height="22" fill="#000"/><rect x="1.500" y="2.300" width="34.500" height="1.500" fill="#1a1a1c"/><rect x="38" y="5.500" width="13" height="1" fill="#ddd"/><rect x="38" y="7.500" width="3" height="3.500" fill="#c03030"/><rect x="42" y="8" width="9" height="2.500" fill="#4a4a4a"/><rect x="38" y="12" width="14" height="1" fill="#888"/><rect x="38" y="14.500" width="5" height="8.500" fill="#8a5a2a"/><rect x="43.500" y="14.500" width="9" height="8.500" fill="#c8a070"/><rect x="45" y="16" width="4" height="5" fill="#e8d8b8"/><rect x="38" y="24.500" width="14" height="1" fill="#999"/><rect x="38" y="26.500" width="6" height="3" fill="#6a5a3a"/><rect x="45" y="26.500" width="7" height="3" fill="#b89a60"/><rect x="3" y="27" width="20" height="1.200" fill="#555"/><rect x="10" y="27" width="4" height="1.500" fill="#ddd"/><rect y="30" width="56.200" height="1.700" fill="#1a2030"/><rect x=".5" y="30.300" width="11" height="1.200" fill="#e8e8e8"/></g></svg>
<div class="t" style="left:403.76px;top:132px;width:80px;text-align:center;font-size:7.8px;color:#1a1a1a;line-height:10px;height:10px;letter-spacing:-0.088px;">Desktop</div>
<div class="t" style="left:403.73px;top:143px;width:80px;text-align:center;font-size:7.8px;color:#1a1a1a;line-height:10px;height:10px;letter-spacing:-0.146px;">Screenshot</div>
<div class="t" style="left:403.71px;top:153px;width:80px;text-align:center;font-size:7.8px;color:#1a1a1a;line-height:10px;height:10px;letter-spacing:-0.175px;">2024.08.25 -</div>
<div class="t" style="left:403.63px;top:163px;width:80px;text-align:center;font-size:7.8px;color:#1a1a1a;line-height:10px;height:10px;letter-spacing:-0.337px;">23.15.36.18</div>
<svg style="left:122.8px;top:203.5px;overflow:hidden;box-shadow:.8px .8px 1.500px rgba(0,0,0,.5)" width="56.2" height="31.7" viewBox="0 0 56.2 31.7"><defs><filter id="tb6" x="-5%" y="-5%" width="110%" height="110%"><feGaussianBlur stdDeviation=".55"/></filter></defs><rect width="56.2" height="31.7" fill="#0a0a0c"/><g filter="url(#tb6)" opacity="0.8"><rect width="56.200" height="31.700" fill="#050505"/><rect width="56.200" height="1.500" fill="#2e2e34"/><rect x="0" y="1.500" width="14" height="28.500" fill="#1e1e22"/><rect x=".6" y="3" width="1.200" height="24" fill="#5a3a7a"/><rect x="3" y="5" width="6" height="1" fill="#999"/><rect x="3" y="8" width="2.500" height="2.500" fill="#c04040"/><rect x="7" y="8.500" width="5" height="1" fill="#888"/><rect x="3" y="12" width="8" height=".8" fill="#666"/><rect x="24" y="20" width="5" height=".8" fill="#888"/><rect x="27" y="24" width="10" height="3.500" fill="#7a6a6a"/><rect x="38" y="24" width="8" height="3.500" fill="#c04a4a"/><rect x="30" y="27.500" width="18" height="2" fill="#3a3a3a"/><rect x="43" y="27.800" width="3" height="1.400" fill="#ddd"/><rect y="30" width="56.200" height="1.700" fill="#1a2030"/><rect x=".5" y="30.300" width="11" height="1.200" fill="#e8e8e8"/></g></svg>
<div class="t" style="left:112.16px;top:241px;width:80px;text-align:center;font-size:7.8px;color:#1a1a1a;line-height:10px;height:10px;letter-spacing:-0.088px;">Desktop</div>
<div class="a" style="left:110px;top:249px;width:80px;height:6.200px;overflow:hidden"><div class="t" style="left:0;top:0.400px;width:82px;text-align:center;color:#1a1a1a">Screenshot</div></div>
<div class="a" style="left:5.6px;top:255.2px;width:488.8px;height:51.7px;background:#f0f0f0;"></div>
<div class="t" style="top:267px;font-size:7.8px;color:#1a1a1a;line-height:10px;height:10px;left:81.8px;">Имя файла:</div>
<div class="a" style="left:126.6px;top:264.5px;width:300px;height:14px;background:#fff;border:1px solid #b4b4b4"></div>

<!-- ================= EXPLORER WINDOW ================= -->
<div class="a" style="left:168.1px;top:182.6px;width:665.5px;height:259.7px;background:#fff;box-shadow:0 0 5px rgba(0,0,0,.5)"></div>
<svg style="left:174.5px;top:188.8px" width="6.8" height="8.6" viewBox="0 0 8 9.200"><path d="M.6 .4h3.400c1.400 0 3.200 .5 3.200 1.600v6.200l-2.800 .8h-3.800z" fill="#f8da7c"/><path d="M.6 .4h2.300l.6 1v6.600l-.6 1h-2.300z" fill="#fdeaa6"/><path d="M4.300 1.500l2.900 .5v6.200l-2.900 .8z" fill="#f3cd62"/></svg>
<div class="a" style="left:186.4px;top:189.5px;width:0.8px;height:7.5px;background:#c8c8c8;"></div>
<svg style="left:194.6px;top:188.6px" width="8.6" height="9" viewBox="0 0 8.6 9"><path d="M.7 .9h5.500l1.600 1.600v6h-7.100z" fill="#fff" stroke="#8a8a8a" stroke-width=".7"/><path d="M2 4.400l1.500 1.800 2.800-3.400" fill="none" stroke="#e0502a" stroke-width="1"/></svg>
<svg style="left:208.3px;top:188.8px" width="6.8" height="8.6" viewBox="0 0 8 9.200"><path d="M.6 .4h3.400c1.400 0 3.200 .5 3.200 1.600v6.200l-2.800 .8h-3.800z" fill="#f8da7c"/><path d="M.6 .4h2.300l.6 1v6.600l-.6 1h-2.300z" fill="#fdeaa6"/><path d="M4.300 1.500l2.900 .5v6.200l-2.900 .8z" fill="#f3cd62"/></svg>
<svg style="left:221.2px;top:191px" width="4" height="4.5" viewBox="0 0 4 4.5"><path d="M0 .4h4" stroke="#333" stroke-width=".7"/><path d="M0 1.800h4l-2 2.400z" fill="#333"/></svg>
<div class="a" style="left:231.9px;top:189.5px;width:0.8px;height:7.5px;background:#c8c8c8;"></div>
<div class="a" style="left:753.7px;top:192.5px;width:6.3px;height:0.8px;background:#333;"></div>
<svg style="left:783.3px;top:189.7px" width="6.6" height="6.6" viewBox="0 0 6.6 6.6"><rect x=".4" y=".4" width="5.800" height="5.800" fill="none" stroke="#333" stroke-width=".8"/></svg>
<svg style="left:814.1px;top:189.7px" width="6.8" height="6.6" viewBox="0 0 6.8 6.6"><path d="M0 0l6.800 6.600M6.800 0l-6.800 6.600" stroke="#222" stroke-width=".85" fill="none"/></svg>
<div class="a" style="left:168.1px;top:202.8px;width:36.9px;height:14.8px;background:#0f62bd;"></div>
<div class="t" style="top:206px;font-size:7.3px;color:#fff;line-height:10px;height:10px;left:178.9px;letter-spacing:-0.437px;">Файл</div>
<div class="t" style="top:206px;font-size:7.3px;color:#3c3c3c;line-height:10px;height:10px;left:214px;letter-spacing:-0.428px;">Главная</div>
<div class="t" style="top:206px;font-size:7.3px;color:#3c3c3c;line-height:10px;height:10px;left:257.2px;letter-spacing:-0.381px;">Поделиться</div>
<div class="t" style="top:206px;font-size:7.3px;color:#3c3c3c;line-height:10px;height:10px;left:312.1px;letter-spacing:-0.702px;">Вид</div>
<div class="a" style="left:168.1px;top:217.3px;width:665.5px;height:0.8px;background:#dcdcdc;"></div>
<svg style="left:810.3px;top:208.8px" width="5.6" height="3.2" viewBox="0 0 5.6 3.2"><path d="M.2 .2l2.600 2.600 2.600-2.600" stroke="#9a9a9a" stroke-width=".7" fill="none"/></svg>
<div class="a" style="left:820.6px;top:204.6px;width:11.2px;height:11.2px;background:#0a5fc2;border-radius:50%"></div>
<div class="t" style="top:205px;font-size:9.3px;color:#fff;line-height:12px;height:12px;left:823.6px;font-weight:bold;">?</div>
<svg style="left:177.1px;top:226.7px" width="7.7" height="6.2" viewBox="0 0 7.7 6.2"><path d="M7.700 3.100h-7.200M3.200 .2l-2.900 2.900 2.900 2.900" stroke="#555" stroke-width=".9" fill="none"/></svg>
<svg style="left:196.9px;top:226.7px" width="7.7" height="6.2" viewBox="0 0 7.7 6.2"><path d="M0 3.100h7.200M4.500 .2l2.900 2.900-2.900 2.900" stroke="#cdcdcd" stroke-width=".9" fill="none"/></svg>
<svg style="left:214.9px;top:228.5px" width="4.2" height="2.6" viewBox="0 0 4.2 2.6"><path d="M.2 .2l1.900 2 1.900-2" stroke="#666" stroke-width=".8" fill="none"/></svg>
<svg style="left:227px;top:225.7px" width="6" height="8" viewBox="0 0 6 8"><path d="M3 8v-7.500M.2 3.300l2.800-2.900 2.800 2.900" stroke="#5a5a5a" stroke-width=".95" fill="none"/></svg>
<div class="a" style="left:238.3px;top:221.7px;width:450.4px;height:14.8px;background:#fff;border:1px solid #e1e1e1"></div>
<svg style="left:241.5px;top:224.7px" width="6.6" height="8.4" viewBox="0 0 8 9.200"><path d="M.6 .4h3.400c1.400 0 3.200 .5 3.200 1.600v6.200l-2.800 .8h-3.800z" fill="#f8da7c"/><path d="M.6 .4h2.300l.6 1v6.600l-.6 1h-2.300z" fill="#fdeaa6"/><path d="M4.300 1.500l2.900 .5v6.200l-2.900 .8z" fill="#f3cd62"/></svg>
<svg style="left:255px;top:227.3px" width="3" height="4.5" viewBox="0 0 3 4.5"><path d="M.3 .3l2 2-2 2" stroke="#555" stroke-width=".7" fill="none"/></svg>
<div class="t" style="top:225px;font-size:7.8px;color:#1a1a1a;line-height:10px;height:10px;left:263.5px;letter-spacing:0.003px;">Этот компьютер</div>
<svg style="left:670.3px;top:227.7px" width="5" height="3.2" viewBox="0 0 5 3.2"><path d="M.3 .3l2.200 2.300 2.200-2.300" stroke="#444" stroke-width=".9" fill="none"/></svg>
<div class="a" style="left:677.3px;top:221.7px;width:0.8px;height:14.8px;background:#e1e1e1;"></div>
<svg style="left:680px;top:225.7px" width="7" height="7" viewBox="0 0 7 7"><path d="M4.800 .9a3 3 0 1 1-2.600 0" stroke="#555" stroke-width=".85" fill="none"/><path d="M3.300 0h2v2" stroke="#555" stroke-width=".85" fill="none"/></svg>
<div class="a" style="left:695.2px;top:221.7px;width:131.1px;height:14.8px;background:#fff;border:1px solid #e1e1e1"></div>
<div class="t" style="top:225px;font-size:7.8px;color:#6d6d6d;line-height:10px;height:10px;left:700.9px;letter-spacing:-0.063px;">Поиск в: Anomaly Custom</div>
<svg style="left:813.6px;top:225.7px" width="7" height="7" viewBox="0 0 7 7"><circle cx="4.300" cy="2.700" r="2.100" stroke="#555" stroke-width=".85" fill="none"/><path d="M2.800 4.200l-2.500 2.500" stroke="#555" stroke-width=".95"/></svg>
<div class="a" style="left:260.1px;top:241px;width:9.7px;height:185.7px;background:#f0f0f0;"></div>
<div class="a" style="left:260.1px;top:327.5px;width:9.7px;height:78.3px;background:#cdcdcd;"></div>
<svg style="left:262.3px;top:244.8px" width="5" height="3.2" viewBox="0 0 5 3.2"><path d="M.3 2.900l2.200-2.400 2.200 2.400" stroke="#505050" stroke-width=".95" fill="none"/></svg>
<svg style="left:262.5px;top:419.8px" width="5" height="3.2" viewBox="0 0 5 3.2"><path d="M.3 .3l2.200 2.400 2.200-2.400" stroke="#505050" stroke-width=".95" fill="none"/></svg>
<div class="a" style="left:168.1px;top:387.3px;width:91.8px;height:15.2px;background:#d9d9d9;"></div>
<div class="a" style="left:168.1px;top:241px;width:91.8px;height:186px;overflow:hidden">
<svg style="left:18.4px;top:8.9px" width="10" height="9" viewBox="0 0 10 9"><path d="M2.200 .5h7.300v5h-7.300z" fill="#2f9be8"/><path d="M2.200 .5h7.300v1.500h-7.300z" fill="#63c3f5"/><path d="M0 7.200l3.500-1.200 4.500 .8-3.800 1.700z" fill="#dfe6ee" stroke="#9fb0c0" stroke-width=".4"/></svg>
<div class="t" style="left:29.4px;top:9px;color:#1a1a1a;">Этот компьютер</div>
<svg style="left:21.8px;top:23.9px" width="9.2" height="10" viewBox="0 0 9.2 10"><rect x=".2" y=".2" width="8.800" height="9.600" fill="#55585c"/><rect x="1.900" y=".6" width="5.400" height="4.200" fill="#2f6fd0"/><rect x="1.900" y="5.200" width="5.400" height="4.200" fill="#2a5fb8"/><rect x="2.400" y="1.300" width="2.400" height="2" fill="#e8b030"/><rect x="4.600" y="2.600" width="2.200" height="1.800" fill="#d84a3a"/><rect x="2.600" y="6" width="2.400" height="2" fill="#4ab04a"/><rect x="4.800" y="7" width="2" height="1.800" fill="#e8a030"/><path d="M1 .8v8.600M8.200 .8v8.600" stroke="#2a2c30" stroke-width=".9" stroke-dasharray="1 .8"/></svg>
<div class="t" style="left:34.4px;top:24px;color:#1a1a1a;">Видео</div>
<svg style="left:22.2px;top:40.1px" width="8" height="9" viewBox="0 0 8 9"><path d="M.7 .3h4.600l2 2v6.400h-6.600z" fill="#fdfdfd" stroke="#a9b4c0" stroke-width=".6"/><path d="M2 3.200h3.500M2 4.800h4M2 6.400h4" stroke="#5ea0dc" stroke-width=".8"/></svg>
<div class="t" style="left:34.4px;top:40px;color:#1a1a1a;">Документы</div>
<svg style="left:22.2px;top:55.7px" width="8" height="9" viewBox="0 0 8 9"><path d="M2.500 0h3v4h2.500l-4 4.500-4-4.500h2.500z" fill="#2c84dc"/></svg>
<div class="t" style="left:34.4px;top:56px;color:#1a1a1a;">Загрузки</div>
<svg style="left:21.9px;top:71.3px" width="9" height="8" viewBox="0 0 9 8"><rect x=".3" y=".8" width="8.400" height="6.400" fill="#eef3f7" stroke="#9aa7b3" stroke-width=".6"/><rect x="1.200" y="1.700" width="6.600" height="2.400" fill="#7fc0ee"/><path d="M1.200 6.300l2.300-2.400 2 1.500 1.300-.9 1 1v.8z" fill="#3f7f4f"/></svg>
<div class="t" style="left:34.4px;top:71px;color:#1a1a1a;">Изображения</div>
<svg style="left:22.9px;top:86.9px" width="7" height="9" viewBox="0 0 7 9"><path d="M2.600 0c.8 1.500 3.400 1.800 3.600 4-.8-1.300-2-1.400-2.700-1.700v4.700a1.700 1.500 0 1 1-1-1.400z" fill="#2c8be6"/></svg>
<div class="t" style="left:34.4px;top:87px;color:#1a1a1a;">Музыка</div>
<svg style="left:21.9px;top:102.5px" width="9" height="9" viewBox="0 0 9 9"><path d="M4.500 .3l4 1.500v5.200l-4 1.700-4-1.700v-5.200z" fill="#2bb5e6"/><path d="M.5 1.800l4 1.500v5.400l-4-1.700z" fill="#7fe0f5"/><path d="M4.500 .3l4 1.500-4 1.500-4-1.500z" fill="#19a0d8"/></svg>
<div class="t" style="left:34.4px;top:102px;color:#1a1a1a;letter-spacing:.12px;">Объемные объекты</div>
<svg style="left:21.9px;top:118.1px" width="9" height="8" viewBox="0 0 9 8"><rect x=".2" y=".6" width="8.600" height="6.400" fill="#1f8fe8"/><rect x=".2" y=".6" width="8.600" height="1.200" fill="#46a8f0"/></svg>
<div class="t" style="left:34.4px;top:118px;color:#1a1a1a;">Рабочий стол</div>
<svg style="left:21.9px;top:133.7px" width="9" height="8" viewBox="0 0 9 8"><path d="M.2 5.300l3.200-1.500 5.400 1-3 1.700z" fill="#dcdcdc"/><path d="M.2 5.300l5.600 1.200v1.500l-5.600-1.300z" fill="#3a3a3a"/><path d="M5.800 6.500l3-1.700v1.400l-3 1.800z" fill="#707070"/><path d="M.8 .4l1.800-.3v1.900h-1.800zM2.900 0l2-.3v2.300h-2zM.8 2.300h1.800v1.800l-1.800-.3zM2.900 2.300h2v2.200l-2-.3z" fill="#2b9ae8"/></svg>
<div class="t" style="left:34.4px;top:134px;color:#1a1a1a;letter-spacing:.12px;">Локальный диск (C:)</div>
<svg style="left:21.9px;top:149.3px" width="9" height="8" viewBox="0 0 9 8"><path d="M.2 5.300l3.200-1.500 5.400 1-3 1.700z" fill="#dcdcdc"/><path d="M.2 5.300l5.600 1.200v1.500l-5.600-1.300z" fill="#3a3a3a"/><path d="M5.800 6.500l3-1.700v1.400l-3 1.800z" fill="#707070"/></svg>
<div class="t" style="left:34.4px;top:149px;color:#1a1a1a;letter-spacing:.12px;">Локальный диск (D:)</div>
<svg style="left:21.9px;top:164.9px" width="9" height="8" viewBox="0 0 9 8"><path d="M.2 5.300l3.200-1.500 5.400 1-3 1.700z" fill="#dcdcdc"/><path d="M.2 5.300l5.600 1.200v1.500l-5.600-1.300z" fill="#3a3a3a"/><path d="M5.800 6.500l3-1.700v1.400l-3 1.800z" fill="#707070"/></svg>
<div class="t" style="left:34.4px;top:165px;color:#1a1a1a;letter-spacing:.12px;">Локальный диск (E:)</div>
</div>
<div class="t" style="top:245px;font-size:7.8px;color:#4c607a;line-height:10px;height:10px;left:284.2px;letter-spacing:-0.064px;">Имя</div>
<div class="t" style="top:245px;font-size:7.8px;color:#4c607a;line-height:10px;height:10px;left:623.8px;letter-spacing:0.174px;">Размер</div>
<div class="a" style="left:673px;top:240.5px;width:0.8px;height:15.5px;background:#e5e5e5;"></div>
<div class="a" style="left:619px;top:240.5px;width:0.8px;height:15.5px;background:#e5e5e5;"></div>
<div class="a" style="left:282.2px;top:355.9px;width:389.4px;height:14.7px;background:#cce8ff;"></div>
<svg style="left:286.1px;top:259.8px" width="6.4" height="9" viewBox="0 0 8 9.200"><path d="M.6 .4h3.400c1.400 0 3.200 .5 3.200 1.600v6.200l-2.800 .8h-3.800z" fill="#f8da7c"/><path d="M.6 .4h2.300l.6 1v6.600l-.6 1h-2.300z" fill="#fdeaa6"/><path d="M4.300 1.500l2.900 .5v6.200l-2.900 .8z" fill="#f3cd62"/></svg>
<div class="t" style="top:261px;font-size:7.8px;color:#1a1a1a;line-height:10px;height:10px;left:297.8px;letter-spacing:-0.06px;">styles</div>
<svg style="left:286.1px;top:273.8px" width="6.4" height="9" viewBox="0 0 8 9.200"><path d="M.6 .4h3.400c1.400 0 3.200 .5 3.200 1.600v6.200l-2.800 .8h-3.800z" fill="#f8da7c"/><path d="M.6 .4h2.300l.6 1v6.600l-.6 1h-2.300z" fill="#fdeaa6"/><path d="M4.300 1.500l2.900 .5v6.200l-2.900 .8z" fill="#f3cd62"/></svg>
<div class="t" style="top:275px;font-size:7.8px;color:#1a1a1a;line-height:10px;height:10px;left:297.8px;letter-spacing:-0.064px;">stylesheets</div>
<svg style="left:286.1px;top:287.9px" width="6.4" height="9" viewBox="0 0 8 9.200"><path d="M.6 .4h3.400c1.400 0 3.200 .5 3.200 1.600v6.200l-2.800 .8h-3.800z" fill="#f8da7c"/><path d="M.6 .4h2.300l.6 1v6.600l-.6 1h-2.300z" fill="#fdeaa6"/><path d="M4.300 1.500l2.900 .5v6.200l-2.900 .8z" fill="#f3cd62"/></svg>
<div class="t" style="top:289px;font-size:7.8px;color:#1a1a1a;line-height:10px;height:10px;left:297.8px;letter-spacing:-0.059px;">tools</div>
<svg style="left:286.1px;top:301.9px" width="6.4" height="9" viewBox="0 0 8 9.200"><path d="M.6 .4h3.400c1.400 0 3.200 .5 3.200 1.600v6.200l-2.800 .8h-3.800z" fill="#f8da7c"/><path d="M.6 .4h2.300l.6 1v6.600l-.6 1h-2.300z" fill="#fdeaa6"/><path d="M4.300 1.500l2.900 .5v6.200l-2.900 .8z" fill="#f3cd62"/></svg>
<div class="t" style="top:303px;font-size:7.8px;color:#1a1a1a;line-height:10px;height:10px;left:297.8px;letter-spacing:-0.06px;">translations</div>
<svg style="left:286.1px;top:316px" width="6.4" height="9" viewBox="0 0 8 9.200"><path d="M.6 .4h3.400c1.400 0 3.200 .5 3.200 1.600v6.200l-2.800 .8h-3.800z" fill="#f8da7c"/><path d="M.6 .4h2.300l.6 1v6.600l-.6 1h-2.300z" fill="#fdeaa6"/><path d="M4.300 1.500l2.900 .5v6.200l-2.900 .8z" fill="#f3cd62"/></svg>
<div class="t" style="top:317px;font-size:7.8px;color:#1a1a1a;line-height:10px;height:10px;left:297.8px;letter-spacing:-0.055px;">tutorials</div>
<svg style="left:286.1px;top:330px" width="6.4" height="9" viewBox="0 0 8 9.200"><path d="M.6 .4h3.400c1.400 0 3.200 .5 3.200 1.600v6.200l-2.800 .8h-3.800z" fill="#f8da7c"/><path d="M.6 .4h2.300l.6 1v6.600l-.6 1h-2.300z" fill="#fdeaa6"/><path d="M4.300 1.500l2.900 .5v6.200l-2.900 .8z" fill="#f3cd62"/></svg>
<div class="t" style="top:331px;font-size:7.8px;color:#1a1a1a;line-height:10px;height:10px;left:297.8px;letter-spacing:-0.079px;">webcache</div>
<svg style="left:286px;top:343.9px" width="8" height="9" viewBox="0 0 8 9"><path d="M.8 .3h4.400l2 2v6.400h-6.400z" fill="#fff" stroke="#9b9b9b" stroke-width=".6"/><path d="M5.200 .3v2h2" fill="none" stroke="#9b9b9b" stroke-width=".6"/></svg>
<div class="t" style="top:345px;font-size:7.8px;color:#1a1a1a;line-height:10px;height:10px;left:297.8px;letter-spacing:-0.071px;">AnomalyLauncher.cfg</div>
<div class="t" style="top:345px;font-size:7.8px;color:#6d6d6d;line-height:10px;height:10px;left:453.7px;letter-spacing:-0.25px;">07.09.2024 23:08</div>
<div class="t" style="top:345px;font-size:7.8px;color:#6d6d6d;line-height:10px;height:10px;left:547.3px;letter-spacing:-0.285px;">Файл "CFG"</div>
<div class="t" style="top:345px;font-size:7.8px;color:#6d6d6d;line-height:10px;height:10px;right:331.3px;letter-spacing:-0.22px;">1 КБ</div>
<svg style="left:285px;top:357.7px" width="10" height="10" viewBox="0 0 10 10"><circle cx="5" cy="5" r="4.700" fill="#1e1e1e"/><circle cx="5" cy="5" r="4" fill="#a4bfc3"/><path d="M4.35 3.87L3.15 1.80A3.7 3.7 0 0 1 6.85 1.80L5.65 3.87A1.3 1.3 0 0 0 4.35 3.87zM6.30 5.00L8.70 5.00A3.7 3.7 0 0 1 6.85 8.20L5.65 6.13A1.3 1.3 0 0 0 6.30 5.00zM4.35 6.13L3.15 8.20A3.7 3.7 0 0 1 1.30 5.00L3.70 5.00A1.3 1.3 0 0 0 4.35 6.13z" fill="#161616"/><circle cx="5" cy="5" r=".7" fill="#161616"/><path d="M1.900 3.300a3.600 3.600 0 0 1 2.300-1.900" stroke="#fff" stroke-width=".7" fill="none" opacity=".8"/></svg>
<div class="t" style="top:359px;font-size:7.8px;color:#1a1a1a;line-height:10px;height:10px;left:297.8px;letter-spacing:-0.075px;">AnomalyLauncher</div>
<div class="t" style="top:359px;font-size:7.8px;color:#6d6d6d;line-height:10px;height:10px;left:453.7px;letter-spacing:-0.25px;">05.07.2023 21:46</div>
<div class="t" style="top:359px;font-size:7.8px;color:#6d6d6d;line-height:10px;height:10px;left:547.3px;letter-spacing:0.125px;">Приложение</div>
<div class="t" style="top:359px;font-size:7.8px;color:#6d6d6d;line-height:10px;height:10px;right:331.3px;letter-spacing:-0.22px;">2 062 КБ</div>
<svg style="left:286px;top:372px" width="8" height="9" viewBox="0 0 8 9"><path d="M.8 .3h4.400l2 2v6.400h-6.400z" fill="#fff" stroke="#9b9b9b" stroke-width=".6"/><circle cx="3.200" cy="5.300" r="1.500" fill="#b9c6d3" stroke="#7f8f9f" stroke-width=".5"/><circle cx="5.200" cy="3.800" r=".9" fill="#d5dde5" stroke="#7f8f9f" stroke-width=".4"/></svg>
<div class="t" style="top:373px;font-size:7.8px;color:#1a1a1a;line-height:10px;height:10px;left:297.8px;letter-spacing:-0.075px;">AnomalyLauncher</div>
<div class="t" style="top:373px;font-size:7.8px;color:#6d6d6d;line-height:10px;height:10px;left:453.7px;letter-spacing:-0.25px;">10.05.2023 23:05</div>
<div class="t" style="top:373px;font-size:7.8px;color:#6d6d6d;line-height:10px;height:10px;left:547.3px;letter-spacing:-0.134px;">Параметры конф...</div>
<div class="t" style="top:373px;font-size:7.8px;color:#6d6d6d;line-height:10px;height:10px;right:331.3px;letter-spacing:-0.22px;">1 КБ</div>
<svg style="left:285px;top:385.8px" width="10" height="10" viewBox="0 0 10 10"><circle cx="5" cy="5" r="4.700" fill="#1e1e1e"/><circle cx="5" cy="5" r="4" fill="#a4bfc3"/><path d="M4.35 3.87L3.15 1.80A3.7 3.7 0 0 1 6.85 1.80L5.65 3.87A1.3 1.3 0 0 0 4.35 3.87zM6.30 5.00L8.70 5.00A3.7 3.7 0 0 1 6.85 8.20L5.65 6.13A1.3 1.3 0 0 0 6.30 5.00zM4.35 6.13L3.15 8.20A3.7 3.7 0 0 1 1.30 5.00L3.70 5.00A1.3 1.3 0 0 0 4.35 6.13z" fill="#161616"/><circle cx="5" cy="5" r=".7" fill="#161616"/><path d="M1.900 3.300a3.600 3.600 0 0 1 2.300-1.900" stroke="#fff" stroke-width=".7" fill="none" opacity=".8"/></svg>
<div class="t" style="top:387px;font-size:7.8px;color:#1a1a1a;line-height:10px;height:10px;left:297.8px;letter-spacing:-0.076px;">AnomalyLauncherBak</div>
<div class="t" style="top:387px;font-size:7.8px;color:#6d6d6d;line-height:10px;height:10px;left:453.7px;letter-spacing:-0.248px;">02.01.2021 6:13</div>
<div class="t" style="top:387px;font-size:7.8px;color:#6d6d6d;line-height:10px;height:10px;left:547.3px;letter-spacing:0.125px;">Приложение</div>
<div class="t" style="top:387px;font-size:7.8px;color:#6d6d6d;line-height:10px;height:10px;right:331.3px;letter-spacing:-0.22px;">2 062 КБ</div>
<svg style="left:286px;top:400.1px" width="8" height="9" viewBox="0 0 8 9"><path d="M.8 .3h4.400l2 2v6.400h-6.400z" fill="#fff" stroke="#9b9b9b" stroke-width=".6"/><circle cx="3.200" cy="5.300" r="1.500" fill="#b9c6d3" stroke="#7f8f9f" stroke-width=".5"/><circle cx="5.200" cy="3.800" r=".9" fill="#d5dde5" stroke="#7f8f9f" stroke-width=".4"/></svg>
<div class="t" style="top:401px;font-size:7.8px;color:#1a1a1a;line-height:10px;height:10px;left:297.8px;letter-spacing:-0.068px;">boost_python38-vc142-mt-x64-1_75.dll</div>
<div class="t" style="top:401px;font-size:7.8px;color:#6d6d6d;line-height:10px;height:10px;left:453.7px;letter-spacing:-0.25px;">27.01.2021 12:56</div>
<div class="t" style="top:401px;font-size:7.8px;color:#6d6d6d;line-height:10px;height:10px;left:547.3px;letter-spacing:-0.137px;">Расширение при...</div>
<div class="t" style="top:401px;font-size:7.8px;color:#6d6d6d;line-height:10px;height:10px;right:331.3px;letter-spacing:-0.22px;">187 КБ</div>
<svg style="left:286px;top:414.1px" width="8" height="9" viewBox="0 0 8 9"><path d="M.8 .3h4.400l2 2v6.400h-6.400z" fill="#fff" stroke="#9b9b9b" stroke-width=".6"/><path d="M2 3.500h4M2 4.800h4M2 6.100h4M2 7.400h4" stroke="#9aa" stroke-width=".5"/></svg>
<div class="t" style="top:415px;font-size:7.8px;color:#1a1a1a;line-height:10px;height:10px;left:297.8px;letter-spacing:-0.074px;">changes151to152</div>
<div class="t" style="top:415px;font-size:7.8px;color:#6d6d6d;line-height:10px;height:10px;left:453.7px;letter-spacing:-0.25px;">07.05.2022 22:25</div>
<div class="t" style="top:415px;font-size:7.8px;color:#6d6d6d;line-height:10px;height:10px;left:547.3px;letter-spacing:-0.109px;">Текстовый докум...</div>
<div class="t" style="top:415px;font-size:7.8px;color:#6d6d6d;line-height:10px;height:10px;right:331.3px;letter-spacing:-0.22px;">15 КБ</div>
<div class="a" style="left:823.2px;top:241px;width:10.4px;height:186px;background:#f0f0f0;"></div>
<div class="a" style="left:823.2px;top:311.8px;width:10.4px;height:30px;background:#cdcdcd;"></div>
<svg style="left:825.9px;top:244.8px" width="5" height="3.2" viewBox="0 0 5 3.2"><path d="M.3 2.900l2.200-2.400 2.200 2.400" stroke="#505050" stroke-width=".95" fill="none"/></svg>
<svg style="left:825.9px;top:418.8px" width="5" height="3.2" viewBox="0 0 5 3.2"><path d="M.3 .3l2.200 2.400 2.200-2.400" stroke="#505050" stroke-width=".95" fill="none"/></svg>
<div class="t" style="top:430px;font-size:7.8px;color:#1e395b;line-height:10px;height:10px;left:178px;letter-spacing:-0.198px;">Элементов: 63</div>
<div class="a" style="left:235.3px;top:430px;width:0.8px;height:9.5px;background:#ececec;"></div>
<div class="t" style="top:430px;font-size:7.8px;color:#1e395b;line-height:10px;height:10px;left:242.8px;letter-spacing:-0.131px;">Выбран 1 элемент: 2,01 МБ</div>
<div class="a" style="left:347.3px;top:430px;width:0.8px;height:9.5px;background:#ececec;"></div>
<div class="a" style="left:801.4px;top:426.2px;width:14.6px;height:15.8px;background:#d4ecfc;border:1px solid #8fd0f8"></div>
<svg style="left:804.8px;top:430px" width="8" height="8.5" viewBox="0 0 8 8.5"><path d="M0 1h1.600M0 3.200h1.600M0 5.400h1.600M0 7.600h1.600" stroke="#d05030" stroke-width="1.100"/><path d="M2.600 1h5.400M2.600 3.200h5.400M2.600 5.400h5.400M2.600 7.600h5.400" stroke="#6a7a8a" stroke-width=".8"/></svg>
<svg style="left:818.8px;top:430px" width="9" height="7.5" viewBox="0 0 9 7.5"><rect x=".3" y=".3" width="8.400" height="6.900" fill="#f4f4f4" stroke="#8a8a8a" stroke-width=".6"/><rect x="1.200" y="1.200" width="6.600" height="2.600" fill="#8cc6ee"/><path d="M1.200 6.200l2.300-2.500 2 1.300 2.300-.8v2z" fill="#3d5a6c"/></svg>

<!-- ================= SPLASH IMAGE ================= -->
<svg style="left:327.15px;top:182.15px;overflow:hidden" width="259.8" height="139" viewBox="0 0 259.8 139">
<defs>
<linearGradient id="sky" x1="0" x2="1" y1="0" y2="0"><stop offset="0" stop-color="#5c5f6a"/><stop offset=".12" stop-color="#777783"/><stop offset=".2" stop-color="#8e8c94"/><stop offset=".27" stop-color="#868994"/><stop offset=".31" stop-color="#8096b4"/><stop offset=".37" stop-color="#7396d0"/><stop offset=".44" stop-color="#b4b8c0"/><stop offset=".54" stop-color="#9096a4"/><stop offset=".6" stop-color="#b8cef0"/><stop offset=".68" stop-color="#b4b8c0"/><stop offset=".8" stop-color="#a4a6aa"/><stop offset=".9" stop-color="#9a9a9c"/><stop offset="1" stop-color="#a8acb2"/></linearGradient>
<linearGradient id="rk1" x1="0" x2="1" y1="0" y2="1"><stop offset="0" stop-color="#241f17"/><stop offset=".35" stop-color="#6a4423"/><stop offset=".6" stop-color="#2e1f12"/><stop offset="1" stop-color="#100d09"/></linearGradient>
<linearGradient id="rk2" x1="0" x2="1" y1="0" y2="1"><stop offset="0" stop-color="#5c3c1e"/><stop offset=".4" stop-color="#452c15"/><stop offset=".65" stop-color="#2a1c10"/><stop offset="1" stop-color="#14100c"/></linearGradient>
<linearGradient id="rk3" x1="0" x2="0" y1="0" y2="1"><stop offset="0" stop-color="#70492a"/><stop offset=".5" stop-color="#46301a"/><stop offset="1" stop-color="#1e1710"/></linearGradient>
<filter id="b1" x="-30%" y="-30%" width="160%" height="160%"><feGaussianBlur stdDeviation="1"/></filter>
<filter id="b2" x="-30%" y="-30%" width="160%" height="160%"><feGaussianBlur stdDeviation="2.6"/></filter>
<filter id="b0" x="-30%" y="-30%" width="160%" height="160%"><feGaussianBlur stdDeviation=".45"/></filter>
<filter id="rough" x="-10%" y="-10%" width="120%" height="120%"><feTurbulence type="fractalNoise" baseFrequency=".22" numOctaves="3" seed="7" result="t"/><feDisplacementMap in="SourceGraphic" in2="t" scale="5" xChannelSelector="R" yChannelSelector="G"/><feGaussianBlur stdDeviation=".5"/></filter>
<filter id="nz" x="0" y="0" width="100%" height="100%"><feTurbulence type="fractalNoise" baseFrequency=".33" numOctaves="3" seed="9" result="n"/><feColorMatrix in="n" type="matrix" values="0 0 0 0 .45  0 0 0 0 .30  0 0 0 0 .13  0 0 0 3.2 -1.8"/><feComposite in2="SourceGraphic" operator="in"/><feGaussianBlur stdDeviation=".4"/></filter>
<filter id="nzd" x="0" y="0" width="100%" height="100%"><feTurbulence type="fractalNoise" baseFrequency=".3" numOctaves="3" seed="11" result="n"/><feColorMatrix in="n" type="matrix" values="0 0 0 0 .05  0 0 0 0 .04  0 0 0 0 .03  0 0 0 3 -1.3"/><feComposite in2="SourceGraphic" operator="in"/><feGaussianBlur stdDeviation=".5"/></filter>
</defs>
<rect width="259.8" height="139" fill="url(#sky)"/>
<g filter="url(#b2)">
<ellipse cx="50" cy="34" rx="16" ry="10" fill="#a09ca2"/>
<ellipse cx="45" cy="4" rx="18" ry="6" fill="#5e6474"/>
<ellipse cx="70" cy="44" rx="12" ry="6" fill="#7a7e86"/>
<ellipse cx="80" cy="12" rx="7" ry="14" fill="#9dbfe8"/>
<ellipse cx="100" cy="8" rx="9" ry="6" fill="#6a92d0"/>
<ellipse cx="93" cy="3" rx="5" ry="3" fill="#f2f4f8"/>
<ellipse cx="113" cy="4" rx="8" ry="4" fill="#eceef2"/>
<ellipse cx="125" cy="6" rx="8" ry="5" fill="#dfe1e6"/>
<ellipse cx="128" cy="18" rx="12" ry="8" fill="#9a9caa"/>
<ellipse cx="132" cy="38" rx="18" ry="12" fill="#3c424e"/>
<ellipse cx="120" cy="46" rx="12" ry="6" fill="#2e3038"/>
<ellipse cx="158" cy="12" rx="11" ry="12" fill="#cfe0fa"/>
<ellipse cx="160" cy="30" rx="9" ry="6" fill="#b8c6dc"/>
<ellipse cx="190" cy="6" rx="18" ry="7" fill="#b4b6bc"/>
<ellipse cx="176" cy="8" rx="6" ry="5" fill="#e0e2e8"/>
<ellipse cx="185" cy="40" rx="12" ry="5" fill="#aab2c0"/>
<ellipse cx="243" cy="8" rx="14" ry="7" fill="#a9adb6"/>
<ellipse cx="240" cy="22" rx="8" ry="5" fill="#cfd3d8"/>
<ellipse cx="246" cy="38" rx="8" ry="9" fill="#bac2cc"/>
<ellipse cx="255" cy="18" rx="6" ry="12" fill="#8e8c88"/>
</g>
<g filter="url(#b1)" fill="none" stroke="#bcd8ff" stroke-width="1.600" opacity=".55">
<path d="M78 0l1 6-3 5 4 6-3 6M84 1l-2 8 3 7M76 12l-8 5-6 6M150 0l4 8-3 7 6 8-4 8M160 0l-4 9 5 8-5 8M168 2l2 9-5 9M236 2l8 10 6 12M250 28l-5 10 3 10"/>
</g>
<g filter="url(#b0)" fill="none" stroke="#e4f0ff" stroke-width=".7" opacity=".9">
<path d="M77 0l2 5-3 4 4 5-2 4 3 4M83 0l-2 6 3 5-1 6M79 9l-6 5-5 3-4 5M74 14l6 8 3 6M81 18l-8 4M72 4l4 4M86 8l4 6"/>
<path d="M146 2l5 6-2 5 6 6-3 6 5 6M158 0l-4 8 5 6-6 8M165 2l4 8-5 8 3 8M150 14l10 3 8 8M171 0l-6 12M147 24l12 6M142 10l8 2M162 16l8-4"/>
<path d="M210 4l6 2M232 2l8 8 4 10 8 4M246 0l4 10 8 6M250 26l-6 8 4 10-6 4M236 30l10 8M222 6l10 4M240 14l10-2M244 36l8 2"/>
</g>
<!-- middle rock -->
<g filter="url(#b0)">
<path d="M57 50l3-1 2-3 3-2 2-4 4-3 2-4 4-3 2-4 3-2 1-4 3-1 2-3 4 1 3-2 4 2 3-2 4 1 2-2 4 2 3 0 3 3 1 4 3 3-1 5 2 4-3 4 1 3-4 3-2 4-3 2 0 4z" fill="url(#rk1)"/>
<path d="M79 26l2-5 3-1 2-4 4 1 3-3 4 2 3-2 4 1 2-2 5 3 3 0 3 4 1 4-4-1-3 2-4-2-5 2-4-1-4 2-4-1-4 3-3 0z" fill="#22221b"/>
<path d="M95 31l6-3 6 1 6-1 3 6-2 5-4 3-2 5-3 3h-14l1-6 3-4z" fill="#14100b" opacity=".9"/>
<path d="M66 44l4-5 5-4 4-6 5-2 3 3-3 4-5 3-3 5-4 4-5 3z" fill="#b87a3c" opacity=".4"/>
</g>
<!-- lower right rock + arch -->
<g filter="url(#b0)">
<path d="M136 50l2-4 3-4 5-3 5-1 4-1 6 1 5 0 6 1 6 1 6 1 5 3 3 1 4 3 2 3z" fill="url(#rk3)"/>
<path d="M139 47l8-2 7-2 10 0 10 1 8 1 6 2 6 3h-55z" fill="#1b150f"/>
<path d="M164 29l1-4 3-2 2-3 5-1 3-3 6-1 4-2 6 1 5-1 4 2 4 0 3 2 4-1 4 1 4 0 4 3 3 2 3 5 3 4 2 6 2 5 1 9h-25l-2-4-3-3-3-4-5-2-4-3-6-1-5-2-7 0-6-1-6 0-4-1z" fill="url(#rk2)"/>
<path d="M165 25l3-3 2-3 5-1 3-3 6-1 4-2 6 1 5-1 4 2 4 0 3 2 3 2-5 2-6-1-6 1-6 0-6 2-6 0-5 3-5 1z" fill="#24231e"/>
<path d="M207 20l5-2 4 1 4-1 5 3 4 3 3 5 3 5 3 7 1 9h-18l-2-8-3-6-3-6-3-4z" fill="#16120d"/>
<path d="M250 50l0-6 2-4 1-4 3-2 2 1 3-1v16z" fill="#13130e"/>
<path d="M172 24l6-2 8 0 8-1 8 1 4 2-4 3-8-1-8 1-8 0z" fill="#a86c36" opacity=".5"/>
</g>
<g stroke="#1a1713" stroke-width=".8" fill="none" filter="url(#b0)"><path d="M215 20l-3-6-2-4M217 19l2-9 1-10M219 18l4-8 6-8 3 1M222 19l5-7 4-4M226 22l6-3 2-4M212 14l-3-2"/></g>
<g fill="#33362f" filter="url(#b1)" opacity=".8"><path d="M60 46l4-5 3 3 3-6 2 5 4-3 2 6 4-2 3 5 6 1v3h-32z"/><path d="M104 44l4-5 3 3 4-4 4 3 5-2 4 4 6-1 3 4 4 1v4h-38z"/></g>
<path d="M26 50l1-7 3-3 4-1 4 2 4 3 5 1 4 2 5 1 6 0v3z" fill="#16160f" filter="url(#b1)"/>
<!-- left rock silhouette and ground -->
<g filter="url(#b0)">
<path d="M-1 -1h25l2 3 1 4 3 3 2 3 4 2 3 3 3 2-1 3-3 2-2 3-4 2-4 1-1 4 1 4-2 3-1 3 4 0 3 2 3-1 3 3 3 0 3 3 3 0 3 2 6 0v92h-65z" fill="#0d0c0a"/>
</g>
<path d="M0 0h20l5 6 6 7 7 5-4 5-8 4-3 4h-23z" fill="#4a453a" opacity=".28" filter="url(#b2)"/>
<rect x="0" y="49" width="259.8" height="90" fill="#14120e"/>
<path d="M0 40h60v99h-60z" fill="#fff" filter="url(#nz)" opacity=".38"/>
<g font-family="Liberation Sans,sans-serif" font-weight="bold" fill="#e2e1dd">
<text transform="translate(26.600 98.300) scale(.42 1)" font-size="30.600" letter-spacing="-.300">S.T.A.L.K.E.R.</text>
<rect x="27.300" y="104.100" width="120" height="3.300" fill="#d6d4d0"/>
<text transform="translate(3.600 134.200) skewX(-9)" font-size="31.300"><tspan textLength="28.500" lengthAdjust="spacingAndGlyphs">A</tspan><tspan dx="-0.500" textLength="81" lengthAdjust="spacingAndGlyphs">NOMALY</tspan></text>
</g>
</svg>

<!-- ================= ERROR DIALOG ================= -->
<div class="a" style="left:379.6px;top:231.1px;width:250.6px;height:107.7px;background:#fff;box-shadow:0 0 4px rgba(0,0,0,.45);outline:.5px solid #b0b0b0"></div>
<svg style="left:384.8px;top:237.2px" width="9.6" height="7.6" viewBox="0 0 9.6 7.6"><rect x=".3" y=".3" width="9" height="7" fill="#f2f2f2" stroke="#b8b8b8" stroke-width=".6"/><rect x="1.200" y="1.500" width="2.600" height="4.600" fill="#2f9a5a"/><rect x="4" y="1.500" width="2.400" height="4.600" fill="#2f7fc8"/><rect x="6.800" y="1.500" width="1.600" height="4.600" fill="#fff"/></svg>
<div class="t" style="top:237px;font-size:7.8px;color:#9b9b9b;line-height:10px;height:10px;left:397.5px;letter-spacing:-0.127px;">Error</div>
<svg style="left:615.3px;top:237.7px" width="6.5" height="6.5" viewBox="0 0 6.5 6.5"><path d="M0 0l6.500 6.500M6.500 0l-6.500 6.500" stroke="#9a9a9a" stroke-width=".8" fill="none"/></svg>
<svg style="left:394.4px;top:268.2px" width="19.6" height="19.6" viewBox="0 0 19.6 19.6"><defs><radialGradient id="eg" cx=".4" cy=".3" r=".8"><stop offset="0" stop-color="#e05a5a"/><stop offset=".5" stop-color="#c62222"/><stop offset="1" stop-color="#8e1010"/></radialGradient></defs><circle cx="9.800" cy="9.800" r="9.500" fill="#d6d6d6" stroke="#a9a9a9" stroke-width=".5"/><circle cx="9.800" cy="9.800" r="8.400" fill="url(#eg)"/><path d="M6 6l7.600 7.600M13.600 6l-7.600 7.600" stroke="#ececec" stroke-width="2.500" fill="none"/></svg>
<div class="t" style="top:269px;font-size:7.8px;color:#1a1a1a;line-height:10px;height:10px;left:420.2px;letter-spacing:-0.265px;">Shader compilation failed, check your log file for additional</div>
<div class="t" style="top:279px;font-size:7.8px;color:#1a1a1a;line-height:10px;height:10px;left:420.2px;letter-spacing:-0.271px;">information.</div>
<div class="a" style="left:379.6px;top:306.1px;width:250.6px;height:32.7px;background:#f0f0f0;"></div>
<div class="a" style="left:566.3px;top:313.4px;width:51.6px;height:17.3px;background:#e1e1e1;border:1px solid #3a3a3a"></div>
<div class="t" style="left:576.9px;top:318px;width:30px;text-align:center;font-size:7.8px;color:#111;line-height:10px;height:10px;">OK</div>

<!-- ================= TASKBAR ================= -->
<div class="a" style="left:0px;top:535.7px;width:1000px;height:26.3px;background:linear-gradient(90deg,#2f4445 0,#2f4445 3.1%,#263c3c 22%,#243234 26%,#233034 33%,#26333a 38%,#2a3942 41.500%,#273044 46%,#262c40 53%,#2c3140 57%,#3a4042 61%,#454a48 66%,#484d4a 71%,#424a48 80%,#38484a 86%,#33454a 91%,#2f4045 94%,#3c4543 95.500%,#494b46 97%,#4c4d48 100%);"></div>
<svg style="left:10.2px;top:543.1px" width="11" height="11" viewBox="0 0 11 11"><path d="M0 1.600l4.500-.6v4.200h-4.500zM5.300 .9l5.700-.9v5.200h-5.700zM0 5.900h4.500v4.200l-4.500-.6zM5.300 5.900h5.700v5.100l-5.700-.8z" fill="#fff"/></svg>
<div class="a" style="left:31.2px;top:536px;width:187.8px;height:26px;background:#f3f3f3;"></div>
<svg style="left:39px;top:543.6px" width="11" height="10.6" viewBox="0 0 11 10.6"><circle cx="7" cy="3.800" r="3.200" stroke="#333" stroke-width="1" fill="none"/><path d="M4.800 6.200l-4.500 4.200" stroke="#333" stroke-width="1.100"/></svg>
<div class="t" style="top:544px;font-size:10px;color:#3a3a3a;line-height:12px;height:12px;left:57.9px;letter-spacing:0.058px;">Поиск</div>
<div class="a" style="left:174px;top:536px;width:45.100px;height:26px;overflow:hidden"><svg style="left:0px;top:0px" width="46" height="26" viewBox="0 0 46 26"><defs><radialGradient id="fl" cx=".35" cy=".45" r=".75"><stop offset="0" stop-color="#ffb0a0"/><stop offset=".35" stop-color="#f4527a"/><stop offset="1" stop-color="#e83468"/></radialGradient><filter id="hb" x="-10%" y="-10%" width="120%" height="120%"><feGaussianBlur stdDeviation=".35"/></filter></defs>
<g filter="url(#hb)">
<path d="M3 1.900c2.500 1.200 4.500 2.600 6.500 4.600 2 2 3.500 4 4.800 6.200l-2.300 2.300c-1.600-1.600-3-3.200-4.500-5.200-1.800-2.600-3.300-5.200-4.500-7.900z" fill="#b39ad0"/>
<path d="M9.300 4.100c1.600 .9 3 1.900 4.200 3.200 1.300 1.400 2.300 2.800 3.200 4.200l-2.200 1.700c-1.300-1.200-2.400-2.600-3.400-4.200-.8-1.500-1.400-3.200-1.800-4.900z" fill="#9a82c0"/>
<path d="M17.500 9.800c1.500-.6 3.500 0 4.500 1.700 .8 1.500 .2 3.300-1 4.500-1.600 1.700-3.600 3.300-6 4.300-1.500 .6-3 .9-4.500 .9l2.500-4c.9-1.600 1.600-3 2.300-4.400.6-1.200 1.300-2.300 2.200-3z" fill="#c4b6d8"/>
<path d="M14.500 18.600c1.600-.6 3.400-2 4.800-3.800l1 1.200c-1.200 1.800-3 3.300-5 4.100z" fill="#56bcb4"/>
<path d="M11.500 19.200l-9 4.300 1.300 1.200 9.200-3.300z" fill="#8c78ac"/>
<ellipse cx="21" cy="11.400" rx="3.200" ry="2.700" fill="#e11cb4"/>
<path d="M23.500 10.600l8.400 2.100-8.400-.2z" fill="#5e5280" stroke="#5e5280" stroke-width=".5"/>
<circle cx="21.400" cy="11" r=".7" fill="#3a2a5a"/>
<circle cx="40.500" cy="12.300" r="4.600" fill="url(#fl)"/><circle cx="43.500" cy="17.500" r="4.600" fill="url(#fl)"/><circle cx="40" cy="21.800" r="4.200" fill="url(#fl)"/><circle cx="36" cy="19.500" r="3.900" fill="url(#fl)"/><circle cx="35.700" cy="14.600" r="3.600" fill="url(#fl)"/>
<path d="M38.500 16.500l-4.300-3" stroke="#f8c060" stroke-width="1.100"/><circle cx="34.600" cy="13.600" r="1" fill="#f8b040"/>
</g></svg></div>
<div class="a" style="left:220.5px;top:536px;width:32.5px;height:26px;background:#4f5b5a;"></div>
<div class="a" style="left:221px;top:560.1px;width:32px;height:1.9px;background:#8fccf5;"></div>
<svg style="left:228.8px;top:542.4px" width="15" height="12.3" viewBox="0 0 15 12.3"><path d="M0 1.200a.8.800 0 0 1 .8-.8h4.600l1.300 1.400h8.300v10.500h-15z" fill="#e8a820"/><path d="M0 3.200h15v9.100h-15z" fill="#fcd462"/><path d="M2.800 7.200h9.400v5.100h-9.400z" fill="#2f8fe8"/><path d="M4.600 9h5.800v3.300h-5.800z" fill="#fcd462"/></svg>
<svg style="left:260.8px;top:541.1px" width="15.2" height="15.2" viewBox="0 0 15.2 15.2"><defs><linearGradient id="stg" x1="0" x2="0" y1="0" y2="1"><stop offset="0" stop-color="#0e1c3e"/><stop offset="1" stop-color="#1a5a9c"/></linearGradient></defs><circle cx="7.600" cy="7.600" r="7.600" fill="url(#stg)"/><circle cx="10.200" cy="5.600" r="2.700" fill="none" stroke="#fff" stroke-width="1"/><circle cx="10.200" cy="5.600" r="1.200" fill="#fff"/><path d="M0 8.200l5.200 2.200a2.200 2.200 0 1 1-1 2.100l-3.700-1.500z" fill="#fff"/><path d="M7.700 7.700l-2.300 3" stroke="#fff" stroke-width="1.600"/></svg>
<svg style="left:292.8px;top:540.6px" width="16" height="16.5" viewBox="0 0 16 16.5"><path d="M4.800 3.800v-1.300a1.400 1.400 0 0 1 1.400-1.400h3.600a1.400 1.400 0 0 1 1.400 1.400v1.300" fill="none" stroke="#3a9ae8" stroke-width="1.100"/><path d="M.8 3.600h14.400v10.800a1.800 1.800 0 0 1-1.800 1.800h-10.800a1.800 1.800 0 0 1-1.800-1.800z" fill="#f4f4f4"/><rect x="4.800" y="6.400" width="2.900" height="2.900" fill="#f25022"/><rect x="8.300" y="6.400" width="2.900" height="2.900" fill="#7fba00"/><rect x="4.800" y="9.900" width="2.900" height="2.900" fill="#00a4ef"/><rect x="8.300" y="9.900" width="2.900" height="2.900" fill="#ffb900"/></svg>
<svg style="left:325.3px;top:540.7px" width="16" height="16" viewBox="0 0 16 16"><circle cx="8" cy="8" r="8" fill="#5865f2"/><path d="M4.200 5.600c1-.6 2-.9 2.700-1l.3.600h1.600l.3-.6c.7.100 1.700.4 2.700 1 .9 1.600 1.400 3.400 1.300 5.200-.9.700-1.800 1.100-2.800 1.300l-.6-1c-.9.300-2.500.300-3.400 0l-.6 1c-1-.2-1.900-.6-2.800-1.300-.1-1.800.4-3.600 1.300-5.200z" fill="#fff"/><ellipse cx="6.400" cy="8.700" rx="1" ry="1.200" fill="#5865f2"/><ellipse cx="9.600" cy="8.700" rx="1" ry="1.200" fill="#5865f2"/></svg>
<div class="a" style="left:352.9px;top:560.5px;width:26.3px;height:1.5px;background:#8cc8f0;"></div>
<svg style="left:357.6px;top:540.7px" width="16" height="16" viewBox="0 0 16 16"><circle cx="8" cy="8" r="8" fill="#fff"/><path d="M4.300 3.600h2l1.900 3.500 2.100-3.500h1.900l-3.200 5.200v4.200h-1.600v-4.200z" fill="#fc3f1d"/><path d="M8.200 7.100l2.100-3.500h1.900l-3.200 5.200z" fill="#ff5ac8"/></svg>
<div class="a" style="left:382.3px;top:536px;width:31.7px;height:26px;background:#6e5d54;"></div>
<div class="a" style="left:382.3px;top:560.5px;width:31.7px;height:1.5px;background:#f07d1a;"></div>
<svg style="left:390.4px;top:541.2px" width="15" height="15" viewBox="0 0 10 10"><circle cx="5" cy="5" r="4.700" fill="#1e1e1e"/><circle cx="5" cy="5" r="4" fill="#a4bfc3"/><path d="M4.35 3.87L3.15 1.80A3.7 3.7 0 0 1 6.85 1.80L5.65 3.87A1.3 1.3 0 0 0 4.35 3.87zM6.30 5.00L8.70 5.00A3.7 3.7 0 0 1 6.85 8.20L5.65 6.13A1.3 1.3 0 0 0 6.30 5.00zM4.35 6.13L3.15 8.20A3.7 3.7 0 0 1 1.30 5.00L3.70 5.00A1.3 1.3 0 0 0 4.35 6.13z" fill="#161616"/><circle cx="5" cy="5" r=".7" fill="#161616"/><path d="M1.900 3.300a3.600 3.600 0 0 1 2.300-1.900" stroke="#fff" stroke-width=".7" fill="none" opacity=".8"/></svg>
<svg style="left:854px;top:546.7px" width="8.8" height="5" viewBox="0 0 8.8 5"><path d="M.4 4.700l4-4.200 4 4.200" stroke="#fff" stroke-width="1" fill="none"/></svg>
<svg style="left:868.6px;top:544.7px" width="11" height="9" viewBox="0 0 11 9"><path d="M2.300 .5h8.200v6h-8.200z" fill="none" stroke="#fff" stroke-width=".9"/><path d="M4.800 8.400h3.400M6.500 6.500v1.900" stroke="#fff" stroke-width=".9"/><path d="M.5 .2v4.600h2" stroke="#fff" stroke-width=".9" fill="none"/><rect x="0" y="2.800" width="1.600" height="2.400" fill="#fff"/></svg>
<svg style="left:884px;top:544.7px" width="11.5" height="9" viewBox="0 0 11.5 9"><path d="M.5 3.200h1.800l2.300-2.300v7.200l-2.300-2.300h-1.800z" fill="none" stroke="#fff" stroke-width=".8"/><path d="M6.200 3a2.200 2.200 0 0 1 0 3M7.800 1.700a4 4 0 0 1 0 5.600M9.400 .5a5.800 5.800 0 0 1 0 8" fill="none" stroke="#fff" stroke-width=".8"/></svg>
<div class="t" style="top:545px;font-size:7.8px;color:#fff;line-height:10px;height:10px;left:902.4px;letter-spacing:-0.997px;">РУС</div>
<div class="t" style="left:922.46px;top:539px;width:40px;text-align:center;font-size:7.8px;color:#fff;line-height:10px;height:10px;letter-spacing:-0.284px;">23:09</div>
<div class="t" style="left:912.76px;top:551px;width:60px;text-align:center;font-size:7.8px;color:#fff;line-height:10px;height:10px;letter-spacing:-0.274px;">07.09.2024</div>
<svg style="left:973.6px;top:544px" width="10.5" height="9" viewBox="0 0 10.5 9"><path d="M0 0h10.400v7h-7.600l-2.800 2z" fill="#fff"/><path d="M1.800 2h6.800M1.800 3.700h6.800M1.800 5.300h4" stroke="#3a4a48" stroke-width=".6"/></svg>
<div class="a" style="left:978.2px;top:549.2px;width:10.2px;height:10.2px;background:#2b2d2b;border-radius:50%;border:.8px solid #e8e8e8"></div>
<div class="t" style="top:550px;font-size:7.4px;color:#fff;line-height:10px;height:10px;left:981.2px;">3</div>
<div class="a" style="left:996.6px;top:535.7px;width:0.8px;height:26.3px;background:#8a8b86;"></div>

</div>
</body>
</html>
